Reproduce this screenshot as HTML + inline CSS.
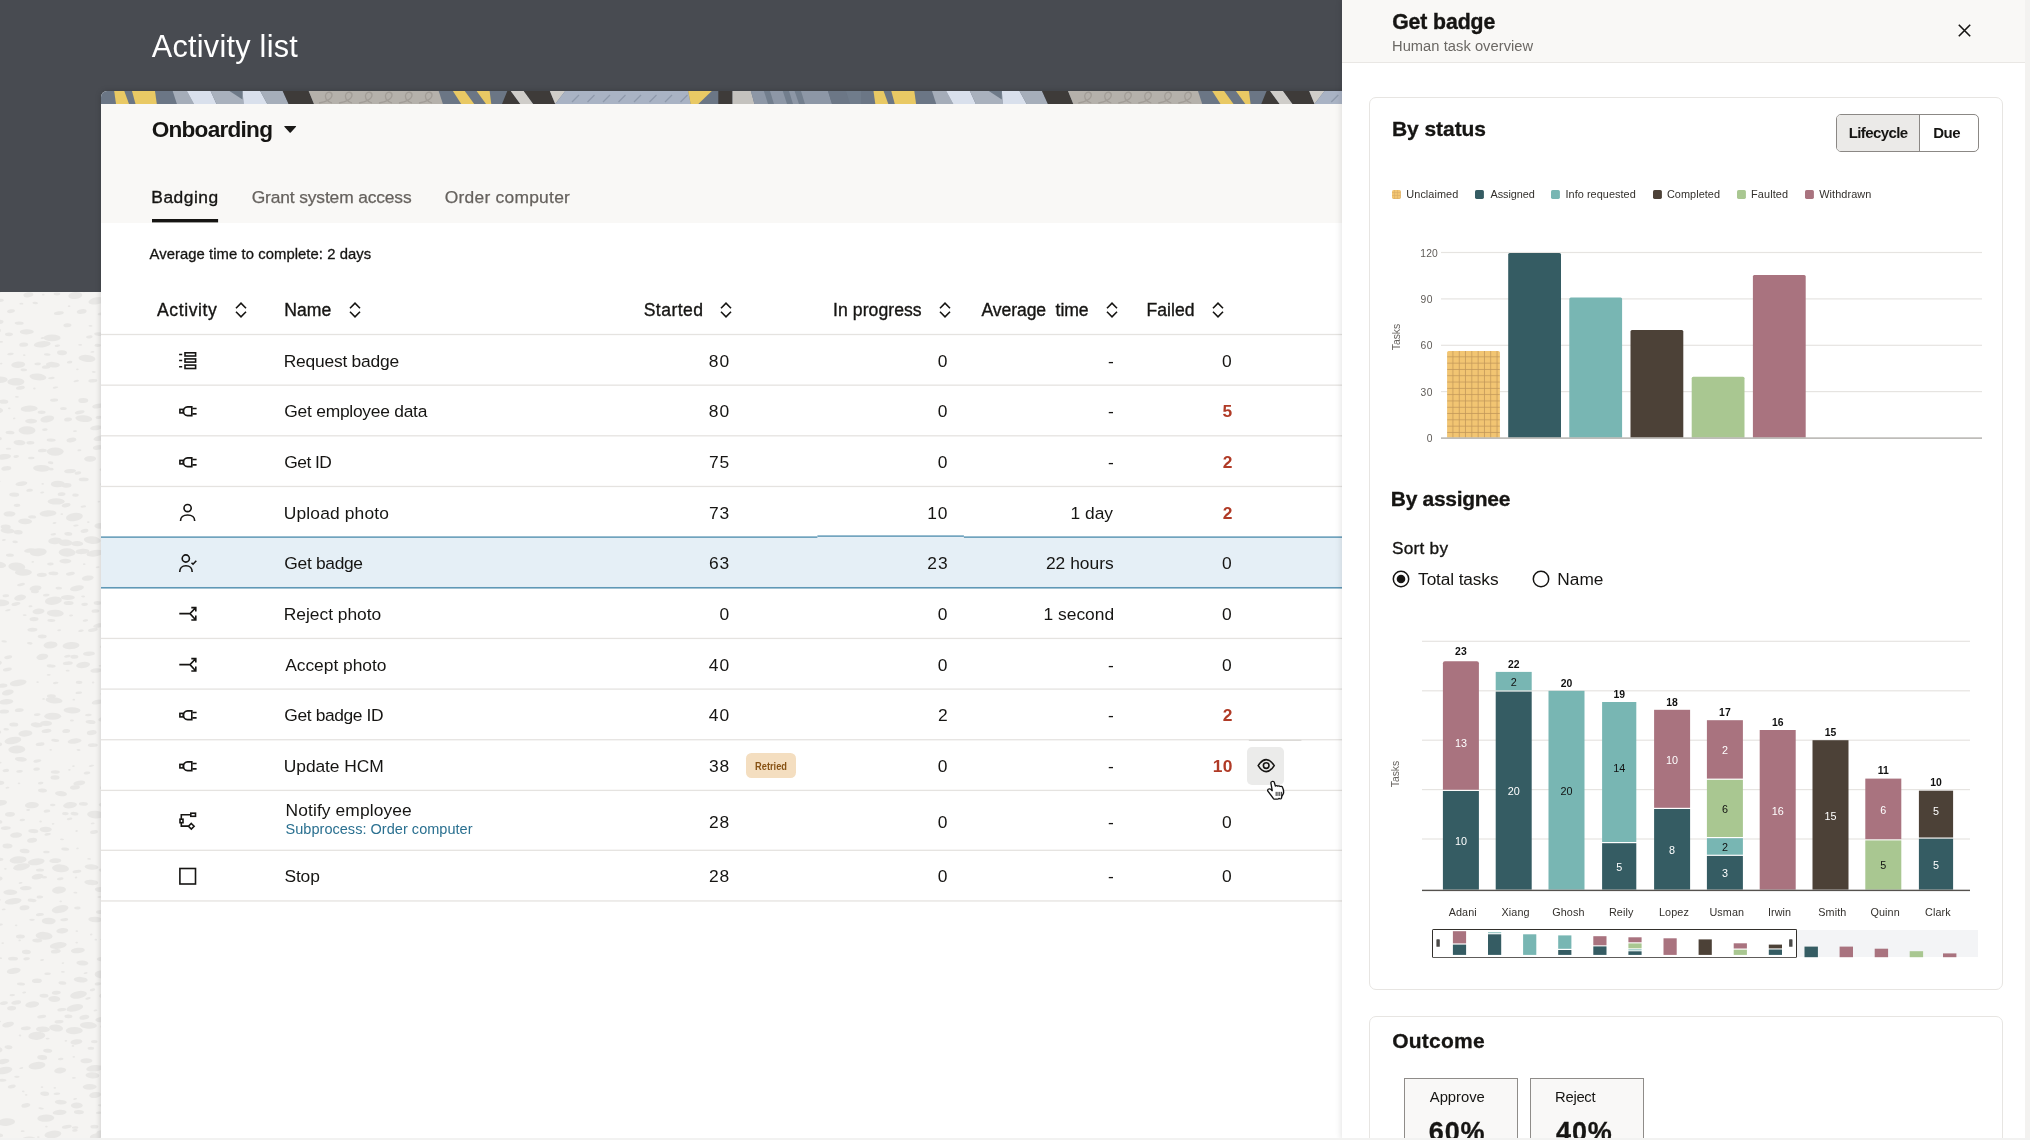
<!DOCTYPE html>
<html><head><meta charset="utf-8"><title>Activity list</title>
<style>
html,body{margin:0;padding:0;}
body{width:2030px;height:1140px;overflow:hidden;position:relative;background:#f5f4f2;font-family:"Liberation Sans",sans-serif;}
#root{position:absolute;left:0;top:0;width:2030px;height:1140px;overflow:hidden;will-change:transform;}
.t{position:absolute;white-space:pre;}
.b{position:absolute;box-sizing:border-box;}
svg{position:absolute;overflow:visible;}
</style></head><body>
<div id="root">
<svg style="left:0;top:0" width="110" height="1140" viewBox="0 0 110 1140"><g fill="#e8e7e5"><ellipse cx="-5.4" cy="291.8" rx="6.0" ry="2.5" transform="rotate(2 -5.4 291.8)"/><ellipse cx="7.0" cy="291.1" rx="2.8" ry="1.0" transform="rotate(3 7.0 291.1)"/><ellipse cx="28.4" cy="294.8" rx="5.0" ry="2.5" transform="rotate(-9 28.4 294.8)"/><ellipse cx="43.3" cy="294.7" rx="1.3" ry="0.9" transform="rotate(2 43.3 294.7)"/><ellipse cx="57.0" cy="294.0" rx="3.3" ry="1.4" transform="rotate(-0 57.0 294.0)"/><ellipse cx="75.3" cy="295.5" rx="7.0" ry="3.5" transform="rotate(-6 75.3 295.5)"/><ellipse cx="84.3" cy="291.3" rx="2.0" ry="0.9" transform="rotate(-7 84.3 291.3)"/><ellipse cx="104.3" cy="290.9" rx="1.3" ry="0.9" transform="rotate(-5 104.3 290.9)"/><ellipse cx="-0.2" cy="300.4" rx="4.0" ry="1.6" transform="rotate(-5 -0.2 300.4)"/><ellipse cx="21.4" cy="303.7" rx="2.0" ry="0.9" transform="rotate(0 21.4 303.7)"/><ellipse cx="35.2" cy="303.0" rx="2.8" ry="1.2" transform="rotate(6 35.2 303.0)"/><ellipse cx="69.1" cy="306.2" rx="1.3" ry="0.9" transform="rotate(-0 69.1 306.2)"/><ellipse cx="96.8" cy="300.8" rx="8.5" ry="3.5" transform="rotate(-10 96.8 300.8)"/><ellipse cx="-6.9" cy="315.3" rx="6.0" ry="2.3" transform="rotate(-10 -6.9 315.3)"/><ellipse cx="11.0" cy="311.2" rx="4.0" ry="1.9" transform="rotate(-9 11.0 311.2)"/><ellipse cx="58.9" cy="313.1" rx="5.0" ry="1.8" transform="rotate(-7 58.9 313.1)"/><ellipse cx="81.7" cy="311.5" rx="5.0" ry="2.4" transform="rotate(-9 81.7 311.5)"/><ellipse cx="100.9" cy="313.8" rx="3.3" ry="1.4" transform="rotate(-11 100.9 313.8)"/><ellipse cx="-1.5" cy="322.0" rx="5.0" ry="2.1" transform="rotate(-5 -1.5 322.0)"/><ellipse cx="19.2" cy="323.1" rx="4.5" ry="1.7" transform="rotate(1 19.2 323.1)"/><ellipse cx="67.4" cy="325.2" rx="4.0" ry="2.0" transform="rotate(-3 67.4 325.2)"/><ellipse cx="90.5" cy="325.9" rx="2.0" ry="0.9" transform="rotate(4 90.5 325.9)"/><ellipse cx="110.5" cy="327.0" rx="4.5" ry="1.8" transform="rotate(4 110.5 327.0)"/><ellipse cx="-7.5" cy="331.7" rx="8.5" ry="3.8" transform="rotate(-11 -7.5 331.7)"/><ellipse cx="9.0" cy="334.3" rx="4.0" ry="1.9" transform="rotate(1 9.0 334.3)"/><ellipse cx="26.8" cy="331.8" rx="7.0" ry="2.6" transform="rotate(-1 26.8 331.8)"/><ellipse cx="42.6" cy="338.0" rx="2.0" ry="0.9" transform="rotate(-7 42.6 338.0)"/><ellipse cx="52.1" cy="337.9" rx="8.5" ry="3.3" transform="rotate(-0 52.1 337.9)"/><ellipse cx="89.3" cy="336.9" rx="3.3" ry="1.5" transform="rotate(-8 89.3 336.9)"/><ellipse cx="98.7" cy="334.1" rx="4.5" ry="1.8" transform="rotate(4 98.7 334.1)"/><ellipse cx="1.1" cy="341.8" rx="2.0" ry="0.9" transform="rotate(-5 1.1 341.8)"/><ellipse cx="23.7" cy="344.7" rx="4.5" ry="2.1" transform="rotate(-6 23.7 344.7)"/><ellipse cx="42.2" cy="344.3" rx="8.5" ry="3.1" transform="rotate(-6 42.2 344.3)"/><ellipse cx="57.4" cy="345.7" rx="2.8" ry="1.2" transform="rotate(-7 57.4 345.7)"/><ellipse cx="80.2" cy="344.9" rx="2.0" ry="0.9" transform="rotate(3 80.2 344.9)"/><ellipse cx="97.8" cy="345.3" rx="3.3" ry="1.6" transform="rotate(2 97.8 345.3)"/><ellipse cx="-8.9" cy="353.2" rx="7.0" ry="3.2" transform="rotate(2 -8.9 353.2)"/><ellipse cx="10.5" cy="354.0" rx="3.3" ry="1.2" transform="rotate(-10 10.5 354.0)"/><ellipse cx="24.2" cy="355.1" rx="1.3" ry="0.9" transform="rotate(2 24.2 355.1)"/><ellipse cx="47.2" cy="354.5" rx="3.3" ry="1.2" transform="rotate(5 47.2 354.5)"/><ellipse cx="62.0" cy="352.7" rx="5.0" ry="2.5" transform="rotate(2 62.0 352.7)"/><ellipse cx="92.4" cy="351.9" rx="2.0" ry="0.9" transform="rotate(-7 92.4 351.9)"/><ellipse cx="1.2" cy="363.6" rx="1.3" ry="0.9" transform="rotate(-9 1.2 363.6)"/><ellipse cx="18.2" cy="364.7" rx="7.0" ry="3.3" transform="rotate(-3 18.2 364.7)"/><ellipse cx="37.7" cy="363.9" rx="3.3" ry="1.4" transform="rotate(-2 37.7 363.9)"/><ellipse cx="52.9" cy="364.7" rx="7.0" ry="2.8" transform="rotate(4 52.9 364.7)"/><ellipse cx="69.6" cy="362.1" rx="2.8" ry="1.4" transform="rotate(-8 69.6 362.1)"/><ellipse cx="87.0" cy="358.4" rx="8.5" ry="3.5" transform="rotate(5 87.0 358.4)"/><ellipse cx="23.8" cy="369.9" rx="3.3" ry="1.4" transform="rotate(3 23.8 369.9)"/><ellipse cx="46.3" cy="367.0" rx="4.5" ry="1.7" transform="rotate(-7 46.3 367.0)"/><ellipse cx="77.4" cy="369.3" rx="1.3" ry="0.9" transform="rotate(-1 77.4 369.3)"/><ellipse cx="93.7" cy="371.9" rx="2.0" ry="1.0" transform="rotate(1 93.7 371.9)"/><ellipse cx="-0.8" cy="379.8" rx="8.5" ry="3.3" transform="rotate(-1 -0.8 379.8)"/><ellipse cx="15.9" cy="381.8" rx="8.5" ry="3.8" transform="rotate(-1 15.9 381.8)"/><ellipse cx="37.9" cy="376.9" rx="8.5" ry="3.4" transform="rotate(6 37.9 376.9)"/><ellipse cx="51.4" cy="378.1" rx="3.3" ry="1.2" transform="rotate(-4 51.4 378.1)"/><ellipse cx="76.2" cy="381.0" rx="2.8" ry="1.1" transform="rotate(-10 76.2 381.0)"/><ellipse cx="92.8" cy="380.7" rx="4.5" ry="1.7" transform="rotate(-3 92.8 380.7)"/><ellipse cx="107.4" cy="380.7" rx="2.0" ry="0.9" transform="rotate(-1 107.4 380.7)"/><ellipse cx="-5.3" cy="391.8" rx="2.8" ry="1.3" transform="rotate(-10 -5.3 391.8)"/><ellipse cx="20.4" cy="387.8" rx="4.5" ry="1.9" transform="rotate(-8 20.4 387.8)"/><ellipse cx="34.4" cy="388.5" rx="1.3" ry="0.9" transform="rotate(1 34.4 388.5)"/><ellipse cx="55.5" cy="387.6" rx="2.8" ry="1.0" transform="rotate(-10 55.5 387.6)"/><ellipse cx="113.2" cy="387.2" rx="8.5" ry="4.2" transform="rotate(4 113.2 387.2)"/><ellipse cx="3.8" cy="401.6" rx="4.5" ry="2.2" transform="rotate(2 3.8 401.6)"/><ellipse cx="16.9" cy="396.9" rx="2.0" ry="0.9" transform="rotate(4 16.9 396.9)"/><ellipse cx="54.1" cy="400.2" rx="4.0" ry="1.6" transform="rotate(-2 54.1 400.2)"/><ellipse cx="83.3" cy="400.5" rx="5.0" ry="2.5" transform="rotate(1 83.3 400.5)"/><ellipse cx="103.3" cy="396.3" rx="1.3" ry="0.9" transform="rotate(-7 103.3 396.3)"/><ellipse cx="-3.9" cy="410.2" rx="7.0" ry="3.1" transform="rotate(3 -3.9 410.2)"/><ellipse cx="9.3" cy="408.4" rx="1.3" ry="0.9" transform="rotate(5 9.3 408.4)"/><ellipse cx="29.2" cy="408.7" rx="8.5" ry="3.1" transform="rotate(-3 29.2 408.7)"/><ellipse cx="41.6" cy="412.2" rx="4.0" ry="1.7" transform="rotate(-0 41.6 412.2)"/><ellipse cx="63.4" cy="408.6" rx="3.3" ry="1.5" transform="rotate(0 63.4 408.6)"/><ellipse cx="79.7" cy="412.3" rx="5.0" ry="1.8" transform="rotate(-11 79.7 412.3)"/><ellipse cx="98.1" cy="406.0" rx="6.0" ry="2.4" transform="rotate(-10 98.1 406.0)"/><ellipse cx="14.2" cy="418.4" rx="1.3" ry="0.9" transform="rotate(-11 14.2 418.4)"/><ellipse cx="31.1" cy="421.1" rx="6.0" ry="2.3" transform="rotate(-0 31.1 421.1)"/><ellipse cx="47.3" cy="419.0" rx="7.0" ry="3.3" transform="rotate(-10 47.3 419.0)"/><ellipse cx="68.1" cy="419.5" rx="4.0" ry="1.9" transform="rotate(-7 68.1 419.5)"/><ellipse cx="83.8" cy="418.6" rx="8.5" ry="3.3" transform="rotate(5 83.8 418.6)"/><ellipse cx="98.9" cy="417.4" rx="3.3" ry="1.6" transform="rotate(-7 98.9 417.4)"/><ellipse cx="-6.3" cy="428.4" rx="2.0" ry="0.9" transform="rotate(-8 -6.3 428.4)"/><ellipse cx="10.0" cy="432.5" rx="4.5" ry="1.8" transform="rotate(3 10.0 432.5)"/><ellipse cx="27.0" cy="430.4" rx="8.5" ry="4.1" transform="rotate(1 27.0 430.4)"/><ellipse cx="44.9" cy="429.6" rx="2.8" ry="1.3" transform="rotate(-2 44.9 429.6)"/><ellipse cx="75.0" cy="431.1" rx="2.0" ry="0.9" transform="rotate(-4 75.0 431.1)"/><ellipse cx="96.1" cy="427.8" rx="6.0" ry="2.4" transform="rotate(-8 96.1 427.8)"/><ellipse cx="-2.6" cy="438.6" rx="4.5" ry="1.8" transform="rotate(1 -2.6 438.6)"/><ellipse cx="19.5" cy="442.6" rx="6.0" ry="2.6" transform="rotate(4 19.5 442.6)"/><ellipse cx="30.4" cy="442.8" rx="4.0" ry="1.7" transform="rotate(1 30.4 442.8)"/><ellipse cx="51.2" cy="440.1" rx="4.5" ry="1.6" transform="rotate(2 51.2 440.1)"/><ellipse cx="71.4" cy="440.0" rx="5.0" ry="2.2" transform="rotate(-9 71.4 440.0)"/><ellipse cx="100.3" cy="438.1" rx="7.0" ry="2.6" transform="rotate(-12 100.3 438.1)"/><ellipse cx="-11.0" cy="451.0" rx="7.0" ry="2.6" transform="rotate(4 -11.0 451.0)"/><ellipse cx="8.5" cy="448.8" rx="2.8" ry="1.0" transform="rotate(1 8.5 448.8)"/><ellipse cx="42.4" cy="450.5" rx="4.5" ry="1.8" transform="rotate(-3 42.4 450.5)"/><ellipse cx="55.2" cy="451.6" rx="8.5" ry="4.1" transform="rotate(0 55.2 451.6)"/><ellipse cx="79.4" cy="450.3" rx="2.0" ry="1.0" transform="rotate(-3 79.4 450.3)"/><ellipse cx="97.8" cy="447.5" rx="5.0" ry="2.4" transform="rotate(-9 97.8 447.5)"/><ellipse cx="4.0" cy="456.8" rx="7.0" ry="2.8" transform="rotate(-6 4.0 456.8)"/><ellipse cx="16.2" cy="456.5" rx="2.8" ry="1.4" transform="rotate(-3 16.2 456.5)"/><ellipse cx="31.3" cy="458.0" rx="3.3" ry="1.3" transform="rotate(1 31.3 458.0)"/><ellipse cx="50.6" cy="462.7" rx="2.8" ry="1.4" transform="rotate(5 50.6 462.7)"/><ellipse cx="90.1" cy="458.8" rx="6.0" ry="2.9" transform="rotate(-2 90.1 458.8)"/><ellipse cx="105.2" cy="457.3" rx="3.3" ry="1.4" transform="rotate(2 105.2 457.3)"/><ellipse cx="-9.0" cy="467.3" rx="1.3" ry="0.9" transform="rotate(-3 -9.0 467.3)"/><ellipse cx="6.3" cy="468.4" rx="5.0" ry="2.2" transform="rotate(-6 6.3 468.4)"/><ellipse cx="41.6" cy="468.3" rx="8.5" ry="3.4" transform="rotate(2 41.6 468.3)"/><ellipse cx="50.9" cy="469.1" rx="2.8" ry="1.3" transform="rotate(1 50.9 469.1)"/><ellipse cx="70.1" cy="471.1" rx="6.0" ry="2.2" transform="rotate(-3 70.1 471.1)"/><ellipse cx="77.9" cy="473.0" rx="3.3" ry="1.6" transform="rotate(-8 77.9 473.0)"/><ellipse cx="102.3" cy="469.5" rx="2.8" ry="1.4" transform="rotate(-5 102.3 469.5)"/><ellipse cx="-1.5" cy="481.5" rx="2.0" ry="0.9" transform="rotate(-4 -1.5 481.5)"/><ellipse cx="21.4" cy="483.7" rx="6.0" ry="2.2" transform="rotate(-8 21.4 483.7)"/><ellipse cx="42.7" cy="483.8" rx="1.3" ry="0.9" transform="rotate(4 42.7 483.8)"/><ellipse cx="57.8" cy="484.0" rx="7.0" ry="3.3" transform="rotate(-2 57.8 484.0)"/><ellipse cx="66.5" cy="485.4" rx="5.0" ry="2.3" transform="rotate(-2 66.5 485.4)"/><ellipse cx="83.7" cy="479.4" rx="5.0" ry="1.9" transform="rotate(0 83.7 479.4)"/><ellipse cx="105.0" cy="483.7" rx="5.0" ry="1.8" transform="rotate(-10 105.0 483.7)"/><ellipse cx="-8.8" cy="493.8" rx="4.5" ry="2.2" transform="rotate(-0 -8.8 493.8)"/><ellipse cx="14.2" cy="494.6" rx="5.0" ry="2.1" transform="rotate(1 14.2 494.6)"/><ellipse cx="29.6" cy="490.3" rx="3.3" ry="1.5" transform="rotate(-6 29.6 490.3)"/><ellipse cx="42.2" cy="492.5" rx="2.0" ry="0.9" transform="rotate(-7 42.2 492.5)"/><ellipse cx="61.6" cy="494.1" rx="4.0" ry="1.9" transform="rotate(-6 61.6 494.1)"/><ellipse cx="75.5" cy="495.2" rx="3.3" ry="1.6" transform="rotate(3 75.5 495.2)"/><ellipse cx="107.8" cy="493.1" rx="2.0" ry="0.9" transform="rotate(-6 107.8 493.1)"/><ellipse cx="17.0" cy="505.3" rx="3.3" ry="1.6" transform="rotate(-2 17.0 505.3)"/><ellipse cx="56.2" cy="501.4" rx="8.5" ry="3.2" transform="rotate(0 56.2 501.4)"/><ellipse cx="66.1" cy="505.2" rx="4.5" ry="2.1" transform="rotate(-11 66.1 505.2)"/><ellipse cx="83.3" cy="506.5" rx="2.8" ry="1.1" transform="rotate(-5 83.3 506.5)"/><ellipse cx="98.9" cy="501.6" rx="1.3" ry="0.9" transform="rotate(-2 98.9 501.6)"/><ellipse cx="-10.0" cy="515.5" rx="3.3" ry="1.5" transform="rotate(-11 -10.0 515.5)"/><ellipse cx="9.5" cy="513.9" rx="6.0" ry="2.7" transform="rotate(-1 9.5 513.9)"/><ellipse cx="32.2" cy="516.9" rx="4.0" ry="1.7" transform="rotate(3 32.2 516.9)"/><ellipse cx="48.0" cy="513.4" rx="8.5" ry="3.2" transform="rotate(-3 48.0 513.4)"/><ellipse cx="61.8" cy="514.1" rx="1.3" ry="0.9" transform="rotate(-5 61.8 514.1)"/><ellipse cx="74.4" cy="517.0" rx="8.5" ry="4.1" transform="rotate(-8 74.4 517.0)"/><ellipse cx="5.7" cy="526.9" rx="5.0" ry="2.5" transform="rotate(1 5.7 526.9)"/><ellipse cx="25.1" cy="521.4" rx="7.0" ry="2.9" transform="rotate(1 25.1 521.4)"/><ellipse cx="54.5" cy="523.0" rx="2.0" ry="1.0" transform="rotate(-7 54.5 523.0)"/><ellipse cx="75.9" cy="525.6" rx="2.8" ry="1.0" transform="rotate(-5 75.9 525.6)"/><ellipse cx="88.3" cy="522.1" rx="1.3" ry="0.9" transform="rotate(-6 88.3 522.1)"/><ellipse cx="100.4" cy="525.9" rx="6.0" ry="2.9" transform="rotate(0 100.4 525.9)"/><ellipse cx="7.6" cy="530.7" rx="7.0" ry="2.7" transform="rotate(4 7.6 530.7)"/><ellipse cx="18.2" cy="532.3" rx="4.5" ry="2.2" transform="rotate(4 18.2 532.3)"/><ellipse cx="53.3" cy="534.3" rx="2.8" ry="1.1" transform="rotate(-8 53.3 534.3)"/><ellipse cx="68.3" cy="533.9" rx="4.0" ry="1.9" transform="rotate(4 68.3 533.9)"/><ellipse cx="84.5" cy="530.9" rx="4.0" ry="1.9" transform="rotate(-10 84.5 530.9)"/><ellipse cx="105.6" cy="533.0" rx="2.0" ry="0.9" transform="rotate(-11 105.6 533.0)"/><ellipse cx="3.9" cy="540.0" rx="2.0" ry="0.9" transform="rotate(-9 3.9 540.0)"/><ellipse cx="15.1" cy="541.9" rx="2.8" ry="1.4" transform="rotate(2 15.1 541.9)"/><ellipse cx="55.2" cy="540.9" rx="7.0" ry="3.3" transform="rotate(-3 55.2 540.9)"/><ellipse cx="65.5" cy="542.8" rx="7.0" ry="3.2" transform="rotate(2 65.5 542.8)"/><ellipse cx="77.2" cy="543.7" rx="6.0" ry="2.6" transform="rotate(1 77.2 543.7)"/><ellipse cx="92.3" cy="540.1" rx="8.5" ry="3.8" transform="rotate(5 92.3 540.1)"/><ellipse cx="108.5" cy="542.9" rx="2.8" ry="1.1" transform="rotate(3 108.5 542.9)"/><ellipse cx="-6.0" cy="553.1" rx="2.0" ry="1.0" transform="rotate(2 -6.0 553.1)"/><ellipse cx="9.9" cy="555.1" rx="4.0" ry="1.7" transform="rotate(1 9.9 555.1)"/><ellipse cx="30.1" cy="550.5" rx="6.0" ry="2.2" transform="rotate(-7 30.1 550.5)"/><ellipse cx="38.3" cy="552.2" rx="8.5" ry="4.0" transform="rotate(-5 38.3 552.2)"/><ellipse cx="67.1" cy="552.5" rx="8.5" ry="4.2" transform="rotate(1 67.1 552.5)"/><ellipse cx="82.4" cy="551.4" rx="7.0" ry="2.7" transform="rotate(-4 82.4 551.4)"/><ellipse cx="94.9" cy="553.2" rx="8.5" ry="3.3" transform="rotate(-8 94.9 553.2)"/><ellipse cx="-2.3" cy="564.7" rx="8.5" ry="3.3" transform="rotate(6 -2.3 564.7)"/><ellipse cx="16.8" cy="566.7" rx="8.5" ry="4.2" transform="rotate(5 16.8 566.7)"/><ellipse cx="32.8" cy="561.9" rx="1.3" ry="0.9" transform="rotate(-2 32.8 561.9)"/><ellipse cx="50.4" cy="563.9" rx="3.3" ry="1.5" transform="rotate(-3 50.4 563.9)"/><ellipse cx="65.4" cy="561.1" rx="6.0" ry="2.3" transform="rotate(0 65.4 561.1)"/><ellipse cx="84.2" cy="564.2" rx="1.3" ry="0.9" transform="rotate(-2 84.2 564.2)"/><ellipse cx="97.7" cy="567.2" rx="2.0" ry="0.9" transform="rotate(-6 97.7 567.2)"/><ellipse cx="-6.8" cy="577.3" rx="4.5" ry="2.1" transform="rotate(-5 -6.8 577.3)"/><ellipse cx="23.4" cy="572.4" rx="8.5" ry="3.3" transform="rotate(-1 23.4 572.4)"/><ellipse cx="41.8" cy="574.9" rx="5.0" ry="2.1" transform="rotate(-2 41.8 574.9)"/><ellipse cx="53.4" cy="573.3" rx="5.0" ry="1.9" transform="rotate(1 53.4 573.3)"/><ellipse cx="70.4" cy="573.7" rx="4.5" ry="1.8" transform="rotate(-8 70.4 573.7)"/><ellipse cx="87.8" cy="578.1" rx="6.0" ry="2.6" transform="rotate(-7 87.8 578.1)"/><ellipse cx="21.0" cy="584.6" rx="4.0" ry="1.5" transform="rotate(-11 21.0 584.6)"/><ellipse cx="35.5" cy="588.3" rx="6.0" ry="2.8" transform="rotate(-8 35.5 588.3)"/><ellipse cx="58.8" cy="588.2" rx="3.3" ry="1.4" transform="rotate(2 58.8 588.2)"/><ellipse cx="77.0" cy="588.2" rx="7.0" ry="2.8" transform="rotate(-10 77.0 588.2)"/><ellipse cx="110.9" cy="588.1" rx="8.5" ry="3.4" transform="rotate(-11 110.9 588.1)"/><ellipse cx="-9.4" cy="593.7" rx="2.8" ry="1.3" transform="rotate(4 -9.4 593.7)"/><ellipse cx="5.8" cy="595.7" rx="3.3" ry="1.5" transform="rotate(-5 5.8 595.7)"/><ellipse cx="20.1" cy="597.7" rx="6.0" ry="2.9" transform="rotate(-11 20.1 597.7)"/><ellipse cx="34.9" cy="591.5" rx="4.0" ry="1.7" transform="rotate(-1 34.9 591.5)"/><ellipse cx="46.3" cy="595.1" rx="3.3" ry="1.3" transform="rotate(-5 46.3 595.1)"/><ellipse cx="67.8" cy="597.5" rx="7.0" ry="2.6" transform="rotate(0 67.8 597.5)"/><ellipse cx="83.1" cy="596.4" rx="2.0" ry="1.0" transform="rotate(1 83.1 596.4)"/><ellipse cx="0.8" cy="602.9" rx="8.5" ry="3.4" transform="rotate(0 0.8 602.9)"/><ellipse cx="15.9" cy="603.9" rx="4.5" ry="1.8" transform="rotate(-10 15.9 603.9)"/><ellipse cx="30.5" cy="606.3" rx="2.0" ry="1.0" transform="rotate(-3 30.5 606.3)"/><ellipse cx="53.4" cy="600.7" rx="8.5" ry="4.1" transform="rotate(-7 53.4 600.7)"/><ellipse cx="68.6" cy="602.9" rx="5.0" ry="2.0" transform="rotate(0 68.6 602.9)"/><ellipse cx="84.6" cy="604.3" rx="3.3" ry="1.6" transform="rotate(-4 84.6 604.3)"/><ellipse cx="97.6" cy="603.0" rx="4.0" ry="1.9" transform="rotate(0 97.6 603.0)"/><ellipse cx="-11.8" cy="611.1" rx="2.8" ry="1.1" transform="rotate(-0 -11.8 611.1)"/><ellipse cx="7.9" cy="610.2" rx="2.8" ry="1.0" transform="rotate(-11 7.9 610.2)"/><ellipse cx="24.7" cy="615.2" rx="2.0" ry="0.9" transform="rotate(3 24.7 615.2)"/><ellipse cx="38.5" cy="611.4" rx="6.0" ry="2.8" transform="rotate(-5 38.5 611.4)"/><ellipse cx="55.3" cy="613.2" rx="8.5" ry="3.5" transform="rotate(2 55.3 613.2)"/><ellipse cx="71.1" cy="615.5" rx="2.0" ry="0.9" transform="rotate(-4 71.1 615.5)"/><ellipse cx="95.5" cy="611.0" rx="4.0" ry="1.8" transform="rotate(-3 95.5 611.0)"/><ellipse cx="-4.8" cy="621.0" rx="4.0" ry="1.8" transform="rotate(-9 -4.8 621.0)"/><ellipse cx="34.0" cy="619.1" rx="4.5" ry="2.1" transform="rotate(-2 34.0 619.1)"/><ellipse cx="51.4" cy="620.4" rx="4.0" ry="1.5" transform="rotate(2 51.4 620.4)"/><ellipse cx="85.4" cy="620.5" rx="2.8" ry="1.2" transform="rotate(-12 85.4 620.5)"/><ellipse cx="99.1" cy="625.4" rx="6.0" ry="2.2" transform="rotate(-12 99.1 625.4)"/><ellipse cx="-6.6" cy="634.2" rx="5.0" ry="2.0" transform="rotate(2 -6.6 634.2)"/><ellipse cx="32.4" cy="629.7" rx="5.0" ry="2.0" transform="rotate(-2 32.4 629.7)"/><ellipse cx="42.2" cy="636.5" rx="4.5" ry="1.9" transform="rotate(-1 42.2 636.5)"/><ellipse cx="59.2" cy="630.2" rx="2.0" ry="1.0" transform="rotate(-6 59.2 630.2)"/><ellipse cx="81.0" cy="630.8" rx="2.8" ry="1.2" transform="rotate(-10 81.0 630.8)"/><ellipse cx="92.9" cy="629.9" rx="5.0" ry="1.8" transform="rotate(-10 92.9 629.9)"/><ellipse cx="4.1" cy="641.4" rx="2.8" ry="1.1" transform="rotate(6 4.1 641.4)"/><ellipse cx="29.8" cy="643.3" rx="2.8" ry="1.3" transform="rotate(5 29.8 643.3)"/><ellipse cx="50.5" cy="645.0" rx="7.0" ry="3.5" transform="rotate(-5 50.5 645.0)"/><ellipse cx="71.0" cy="645.6" rx="8.5" ry="3.5" transform="rotate(-4 71.0 645.6)"/><ellipse cx="105.9" cy="646.5" rx="6.0" ry="2.5" transform="rotate(-3 105.9 646.5)"/><ellipse cx="8.2" cy="657.2" rx="4.0" ry="1.8" transform="rotate(-9 8.2 657.2)"/><ellipse cx="42.3" cy="656.8" rx="6.0" ry="3.0" transform="rotate(-10 42.3 656.8)"/><ellipse cx="67.4" cy="656.3" rx="3.3" ry="1.3" transform="rotate(-9 67.4 656.3)"/><ellipse cx="74.4" cy="656.8" rx="4.0" ry="2.0" transform="rotate(1 74.4 656.8)"/><ellipse cx="89.0" cy="653.7" rx="6.0" ry="2.3" transform="rotate(-3 89.0 653.7)"/><ellipse cx="-4.0" cy="663.4" rx="6.0" ry="2.9" transform="rotate(-11 -4.0 663.4)"/><ellipse cx="51.2" cy="666.0" rx="4.5" ry="1.6" transform="rotate(3 51.2 666.0)"/><ellipse cx="67.8" cy="663.2" rx="5.0" ry="1.8" transform="rotate(-3 67.8 663.2)"/><ellipse cx="83.1" cy="665.0" rx="7.0" ry="3.1" transform="rotate(-8 83.1 665.0)"/><ellipse cx="100.0" cy="665.9" rx="1.3" ry="0.9" transform="rotate(5 100.0 665.9)"/><ellipse cx="-9.4" cy="670.0" rx="2.8" ry="1.3" transform="rotate(-10 -9.4 670.0)"/><ellipse cx="7.4" cy="669.5" rx="4.5" ry="1.8" transform="rotate(-8 7.4 669.5)"/><ellipse cx="48.7" cy="674.8" rx="2.0" ry="0.9" transform="rotate(-5 48.7 674.8)"/><ellipse cx="67.6" cy="670.7" rx="2.0" ry="0.9" transform="rotate(-2 67.6 670.7)"/><ellipse cx="96.3" cy="670.5" rx="6.0" ry="2.3" transform="rotate(-5 96.3 670.5)"/><ellipse cx="109.5" cy="672.2" rx="4.5" ry="1.9" transform="rotate(5 109.5 672.2)"/><ellipse cx="2.4" cy="685.7" rx="5.0" ry="2.1" transform="rotate(-5 2.4 685.7)"/><ellipse cx="18.2" cy="682.8" rx="8.5" ry="3.2" transform="rotate(-8 18.2 682.8)"/><ellipse cx="37.6" cy="682.1" rx="1.3" ry="0.9" transform="rotate(4 37.6 682.1)"/><ellipse cx="55.7" cy="682.9" rx="2.8" ry="1.2" transform="rotate(-6 55.7 682.9)"/><ellipse cx="79.1" cy="682.4" rx="3.3" ry="1.6" transform="rotate(3 79.1 682.4)"/><ellipse cx="93.1" cy="682.5" rx="1.3" ry="0.9" transform="rotate(-0 93.1 682.5)"/><ellipse cx="-5.8" cy="694.1" rx="2.0" ry="0.9" transform="rotate(2 -5.8 694.1)"/><ellipse cx="7.8" cy="692.5" rx="6.0" ry="2.8" transform="rotate(-12 7.8 692.5)"/><ellipse cx="51.4" cy="696.1" rx="4.5" ry="1.9" transform="rotate(2 51.4 696.1)"/><ellipse cx="78.8" cy="692.8" rx="3.3" ry="1.2" transform="rotate(-7 78.8 692.8)"/><ellipse cx="105.3" cy="693.4" rx="5.0" ry="2.1" transform="rotate(-9 105.3 693.4)"/><ellipse cx="6.4" cy="701.8" rx="7.0" ry="2.7" transform="rotate(-5 6.4 701.8)"/><ellipse cx="43.6" cy="698.9" rx="1.3" ry="0.9" transform="rotate(1 43.6 698.9)"/><ellipse cx="54.1" cy="700.3" rx="8.5" ry="3.1" transform="rotate(5 54.1 700.3)"/><ellipse cx="73.8" cy="699.7" rx="1.3" ry="0.9" transform="rotate(-2 73.8 699.7)"/><ellipse cx="97.6" cy="702.1" rx="6.0" ry="2.3" transform="rotate(-10 97.6 702.1)"/><ellipse cx="-11.5" cy="712.0" rx="4.0" ry="1.9" transform="rotate(-4 -11.5 712.0)"/><ellipse cx="4.1" cy="711.6" rx="5.0" ry="2.0" transform="rotate(-2 4.1 711.6)"/><ellipse cx="19.3" cy="710.1" rx="4.5" ry="1.9" transform="rotate(-5 19.3 710.1)"/><ellipse cx="37.2" cy="714.6" rx="3.3" ry="1.4" transform="rotate(-5 37.2 714.6)"/><ellipse cx="52.7" cy="716.2" rx="8.5" ry="3.5" transform="rotate(0 52.7 716.2)"/><ellipse cx="72.0" cy="710.3" rx="8.5" ry="3.1" transform="rotate(2 72.0 710.3)"/><ellipse cx="88.4" cy="715.0" rx="3.3" ry="1.3" transform="rotate(-4 88.4 715.0)"/><ellipse cx="106.9" cy="712.2" rx="4.0" ry="1.8" transform="rotate(-8 106.9 712.2)"/><ellipse cx="-3.9" cy="723.4" rx="4.0" ry="1.8" transform="rotate(-11 -3.9 723.4)"/><ellipse cx="13.8" cy="724.6" rx="4.5" ry="2.0" transform="rotate(2 13.8 724.6)"/><ellipse cx="36.7" cy="724.9" rx="6.0" ry="2.5" transform="rotate(5 36.7 724.9)"/><ellipse cx="46.0" cy="723.4" rx="6.0" ry="2.7" transform="rotate(0 46.0 723.4)"/><ellipse cx="71.9" cy="720.5" rx="2.0" ry="1.0" transform="rotate(3 71.9 720.5)"/><ellipse cx="90.6" cy="722.0" rx="5.0" ry="2.0" transform="rotate(5 90.6 722.0)"/><ellipse cx="105.2" cy="719.1" rx="7.0" ry="2.7" transform="rotate(-7 105.2 719.1)"/><ellipse cx="-4.8" cy="732.0" rx="6.0" ry="2.6" transform="rotate(2 -4.8 732.0)"/><ellipse cx="6.2" cy="729.3" rx="2.8" ry="1.3" transform="rotate(3 6.2 729.3)"/><ellipse cx="25.4" cy="733.4" rx="7.0" ry="3.2" transform="rotate(-4 25.4 733.4)"/><ellipse cx="46.5" cy="730.9" rx="5.0" ry="2.0" transform="rotate(-7 46.5 730.9)"/><ellipse cx="66.2" cy="731.0" rx="4.0" ry="2.0" transform="rotate(-8 66.2 731.0)"/><ellipse cx="91.7" cy="732.6" rx="5.0" ry="2.4" transform="rotate(-8 91.7 732.6)"/><ellipse cx="108.2" cy="736.2" rx="4.0" ry="1.7" transform="rotate(-6 108.2 736.2)"/><ellipse cx="-2.3" cy="744.7" rx="4.5" ry="2.1" transform="rotate(-8 -2.3 744.7)"/><ellipse cx="12.9" cy="740.5" rx="8.5" ry="3.5" transform="rotate(-9 12.9 740.5)"/><ellipse cx="40.1" cy="744.2" rx="4.5" ry="1.8" transform="rotate(-7 40.1 744.2)"/><ellipse cx="55.2" cy="740.4" rx="4.0" ry="1.5" transform="rotate(4 55.2 740.4)"/><ellipse cx="74.6" cy="741.1" rx="7.0" ry="2.6" transform="rotate(-7 74.6 741.1)"/><ellipse cx="92.8" cy="745.2" rx="5.0" ry="1.9" transform="rotate(-1 92.8 745.2)"/><ellipse cx="108.9" cy="743.3" rx="7.0" ry="3.3" transform="rotate(-1 108.9 743.3)"/><ellipse cx="-7.3" cy="751.6" rx="7.0" ry="2.7" transform="rotate(1 -7.3 751.6)"/><ellipse cx="16.8" cy="749.5" rx="8.5" ry="3.9" transform="rotate(-2 16.8 749.5)"/><ellipse cx="50.7" cy="749.8" rx="1.3" ry="0.9" transform="rotate(6 50.7 749.8)"/><ellipse cx="78.5" cy="750.0" rx="2.0" ry="0.9" transform="rotate(4 78.5 750.0)"/><ellipse cx="-0.4" cy="762.6" rx="2.0" ry="0.9" transform="rotate(-8 -0.4 762.6)"/><ellipse cx="20.9" cy="759.3" rx="6.0" ry="2.3" transform="rotate(5 20.9 759.3)"/><ellipse cx="37.3" cy="761.0" rx="4.0" ry="1.6" transform="rotate(-9 37.3 761.0)"/><ellipse cx="73.5" cy="766.1" rx="1.3" ry="0.9" transform="rotate(-2 73.5 766.1)"/><ellipse cx="91.5" cy="765.8" rx="2.8" ry="1.0" transform="rotate(-11 91.5 765.8)"/><ellipse cx="-9.2" cy="773.0" rx="8.5" ry="3.7" transform="rotate(3 -9.2 773.0)"/><ellipse cx="5.8" cy="770.5" rx="3.3" ry="1.6" transform="rotate(-6 5.8 770.5)"/><ellipse cx="19.6" cy="771.4" rx="3.3" ry="1.3" transform="rotate(-6 19.6 771.4)"/><ellipse cx="36.6" cy="769.1" rx="3.3" ry="1.6" transform="rotate(-8 36.6 769.1)"/><ellipse cx="55.3" cy="772.0" rx="4.5" ry="1.7" transform="rotate(-1 55.3 772.0)"/><ellipse cx="69.4" cy="769.8" rx="1.3" ry="0.9" transform="rotate(-6 69.4 769.8)"/><ellipse cx="87.0" cy="773.0" rx="3.3" ry="1.4" transform="rotate(-8 87.0 773.0)"/><ellipse cx="103.9" cy="774.1" rx="2.8" ry="1.2" transform="rotate(6 103.9 774.1)"/><ellipse cx="-0.2" cy="782.9" rx="4.5" ry="2.2" transform="rotate(-2 -0.2 782.9)"/><ellipse cx="19.0" cy="783.3" rx="1.3" ry="0.9" transform="rotate(-4 19.0 783.3)"/><ellipse cx="40.7" cy="783.1" rx="2.8" ry="1.4" transform="rotate(-6 40.7 783.1)"/><ellipse cx="55.0" cy="777.5" rx="4.5" ry="2.2" transform="rotate(0 55.0 777.5)"/><ellipse cx="79.3" cy="783.1" rx="6.0" ry="2.5" transform="rotate(-9 79.3 783.1)"/><ellipse cx="-9.3" cy="790.9" rx="8.5" ry="3.2" transform="rotate(-2 -9.3 790.9)"/><ellipse cx="7.4" cy="787.7" rx="2.0" ry="0.9" transform="rotate(-6 7.4 787.7)"/><ellipse cx="42.5" cy="790.5" rx="4.5" ry="2.0" transform="rotate(4 42.5 790.5)"/><ellipse cx="61.0" cy="793.7" rx="6.0" ry="2.6" transform="rotate(6 61.0 793.7)"/><ellipse cx="74.9" cy="787.4" rx="5.0" ry="2.2" transform="rotate(-5 74.9 787.4)"/><ellipse cx="106.0" cy="787.3" rx="6.0" ry="2.7" transform="rotate(-6 106.0 787.3)"/><ellipse cx="0.1" cy="802.9" rx="7.0" ry="2.9" transform="rotate(-6 0.1 802.9)"/><ellipse cx="31.9" cy="805.2" rx="7.0" ry="3.1" transform="rotate(-3 31.9 805.2)"/><ellipse cx="52.8" cy="805.0" rx="2.8" ry="1.2" transform="rotate(2 52.8 805.0)"/><ellipse cx="70.0" cy="805.2" rx="7.0" ry="3.1" transform="rotate(-7 70.0 805.2)"/><ellipse cx="83.4" cy="803.8" rx="4.5" ry="1.9" transform="rotate(2 83.4 803.8)"/><ellipse cx="104.7" cy="804.5" rx="6.0" ry="2.5" transform="rotate(-2 104.7 804.5)"/><ellipse cx="-9.2" cy="811.1" rx="2.8" ry="1.4" transform="rotate(-10 -9.2 811.1)"/><ellipse cx="10.0" cy="814.3" rx="5.0" ry="2.4" transform="rotate(-3 10.0 814.3)"/><ellipse cx="28.2" cy="810.0" rx="2.0" ry="0.9" transform="rotate(3 28.2 810.0)"/><ellipse cx="46.9" cy="811.1" rx="3.3" ry="1.5" transform="rotate(-7 46.9 811.1)"/><ellipse cx="65.4" cy="813.7" rx="3.3" ry="1.6" transform="rotate(2 65.4 813.7)"/><ellipse cx="74.5" cy="813.7" rx="4.0" ry="1.8" transform="rotate(5 74.5 813.7)"/><ellipse cx="95.6" cy="814.6" rx="8.5" ry="3.9" transform="rotate(4 95.6 814.6)"/><ellipse cx="-2.5" cy="821.8" rx="5.0" ry="2.0" transform="rotate(2 -2.5 821.8)"/><ellipse cx="22.3" cy="820.0" rx="2.8" ry="1.3" transform="rotate(-5 22.3 820.0)"/><ellipse cx="40.6" cy="821.5" rx="1.3" ry="0.9" transform="rotate(-3 40.6 821.5)"/><ellipse cx="53.1" cy="823.8" rx="1.3" ry="0.9" transform="rotate(-8 53.1 823.8)"/><ellipse cx="69.6" cy="818.9" rx="2.8" ry="1.2" transform="rotate(-9 69.6 818.9)"/><ellipse cx="92.7" cy="823.4" rx="2.0" ry="0.9" transform="rotate(-7 92.7 823.4)"/><ellipse cx="108.6" cy="818.9" rx="6.0" ry="2.8" transform="rotate(-3 108.6 818.9)"/><ellipse cx="-6.3" cy="827.6" rx="6.0" ry="2.8" transform="rotate(5 -6.3 827.6)"/><ellipse cx="5.8" cy="828.1" rx="5.0" ry="1.8" transform="rotate(-3 5.8 828.1)"/><ellipse cx="33.3" cy="831.1" rx="5.0" ry="2.0" transform="rotate(4 33.3 831.1)"/><ellipse cx="45.7" cy="829.5" rx="6.0" ry="2.7" transform="rotate(-0 45.7 829.5)"/><ellipse cx="76.6" cy="831.0" rx="1.3" ry="0.9" transform="rotate(-11 76.6 831.0)"/><ellipse cx="94.0" cy="832.1" rx="4.0" ry="1.9" transform="rotate(-7 94.0 832.1)"/><ellipse cx="-3.2" cy="836.0" rx="2.0" ry="1.0" transform="rotate(4 -3.2 836.0)"/><ellipse cx="16.1" cy="835.1" rx="6.0" ry="2.7" transform="rotate(-4 16.1 835.1)"/><ellipse cx="32.1" cy="840.3" rx="5.0" ry="2.4" transform="rotate(-5 32.1 840.3)"/><ellipse cx="47.7" cy="834.3" rx="3.3" ry="1.2" transform="rotate(-11 47.7 834.3)"/><ellipse cx="62.0" cy="839.4" rx="2.0" ry="0.9" transform="rotate(6 62.0 839.4)"/><ellipse cx="105.1" cy="837.8" rx="1.3" ry="0.9" transform="rotate(-5 105.1 837.8)"/><ellipse cx="-10.0" cy="848.4" rx="4.0" ry="1.7" transform="rotate(-4 -10.0 848.4)"/><ellipse cx="7.5" cy="846.0" rx="5.0" ry="2.4" transform="rotate(1 7.5 846.0)"/><ellipse cx="24.6" cy="851.0" rx="5.0" ry="2.3" transform="rotate(5 24.6 851.0)"/><ellipse cx="46.4" cy="852.0" rx="3.3" ry="1.3" transform="rotate(-0 46.4 852.0)"/><ellipse cx="65.2" cy="849.1" rx="4.0" ry="1.6" transform="rotate(6 65.2 849.1)"/><ellipse cx="77.5" cy="848.4" rx="1.3" ry="0.9" transform="rotate(-10 77.5 848.4)"/><ellipse cx="0.1" cy="859.3" rx="3.3" ry="1.6" transform="rotate(1 0.1 859.3)"/><ellipse cx="18.1" cy="859.9" rx="8.5" ry="3.6" transform="rotate(-5 18.1 859.9)"/><ellipse cx="36.2" cy="861.8" rx="8.5" ry="3.4" transform="rotate(-7 36.2 861.8)"/><ellipse cx="55.3" cy="860.7" rx="6.0" ry="2.4" transform="rotate(-3 55.3 860.7)"/><ellipse cx="89.2" cy="858.9" rx="2.0" ry="0.9" transform="rotate(6 89.2 858.9)"/><ellipse cx="-7.1" cy="868.6" rx="2.8" ry="1.3" transform="rotate(-7 -7.1 868.6)"/><ellipse cx="5.4" cy="868.8" rx="1.3" ry="0.9" transform="rotate(2 5.4 868.8)"/><ellipse cx="21.6" cy="866.8" rx="8.5" ry="3.4" transform="rotate(-10 21.6 866.8)"/><ellipse cx="40.0" cy="870.0" rx="4.0" ry="1.5" transform="rotate(-0 40.0 870.0)"/><ellipse cx="60.5" cy="868.3" rx="8.5" ry="3.9" transform="rotate(4 60.5 868.3)"/><ellipse cx="76.9" cy="871.5" rx="4.5" ry="1.6" transform="rotate(-7 76.9 871.5)"/><ellipse cx="91.6" cy="867.0" rx="7.0" ry="2.7" transform="rotate(5 91.6 867.0)"/><ellipse cx="103.8" cy="870.1" rx="5.0" ry="1.9" transform="rotate(2 103.8 870.1)"/><ellipse cx="-1.8" cy="878.8" rx="4.5" ry="2.2" transform="rotate(-8 -1.8 878.8)"/><ellipse cx="20.6" cy="882.9" rx="2.0" ry="0.9" transform="rotate(-12 20.6 882.9)"/><ellipse cx="37.6" cy="876.7" rx="6.0" ry="2.7" transform="rotate(-10 37.6 876.7)"/><ellipse cx="44.3" cy="877.3" rx="2.8" ry="1.2" transform="rotate(0 44.3 877.3)"/><ellipse cx="60.2" cy="878.8" rx="3.3" ry="1.4" transform="rotate(-8 60.2 878.8)"/><ellipse cx="76.0" cy="877.5" rx="1.3" ry="0.9" transform="rotate(-9 76.0 877.5)"/><ellipse cx="91.3" cy="882.4" rx="7.0" ry="2.7" transform="rotate(4 91.3 882.4)"/><ellipse cx="112.9" cy="878.8" rx="7.0" ry="2.8" transform="rotate(-7 112.9 878.8)"/><ellipse cx="-7.6" cy="889.2" rx="3.3" ry="1.3" transform="rotate(-0 -7.6 889.2)"/><ellipse cx="10.3" cy="892.3" rx="7.0" ry="2.7" transform="rotate(0 10.3 892.3)"/><ellipse cx="25.8" cy="888.1" rx="6.0" ry="2.2" transform="rotate(-2 25.8 888.1)"/><ellipse cx="59.0" cy="890.1" rx="7.0" ry="3.5" transform="rotate(-6 59.0 890.1)"/><ellipse cx="75.4" cy="892.6" rx="2.0" ry="0.9" transform="rotate(2 75.4 892.6)"/><ellipse cx="100.8" cy="889.5" rx="6.0" ry="2.6" transform="rotate(2 100.8 889.5)"/><ellipse cx="-2.6" cy="899.9" rx="3.3" ry="1.5" transform="rotate(-2 -2.6 899.9)"/><ellipse cx="13.1" cy="901.3" rx="8.5" ry="3.1" transform="rotate(-8 13.1 901.3)"/><ellipse cx="32.1" cy="900.4" rx="4.5" ry="1.7" transform="rotate(6 32.1 900.4)"/><ellipse cx="39.9" cy="897.0" rx="3.3" ry="1.5" transform="rotate(2 39.9 897.0)"/><ellipse cx="60.7" cy="901.3" rx="1.3" ry="0.9" transform="rotate(6 60.7 901.3)"/><ellipse cx="99.4" cy="897.0" rx="2.0" ry="0.9" transform="rotate(-2 99.4 897.0)"/><ellipse cx="-7.8" cy="908.0" rx="2.8" ry="1.2" transform="rotate(-1 -7.8 908.0)"/><ellipse cx="3.7" cy="909.4" rx="2.0" ry="0.9" transform="rotate(-7 3.7 909.4)"/><ellipse cx="24.5" cy="907.8" rx="5.0" ry="2.5" transform="rotate(-5 24.5 907.8)"/><ellipse cx="39.9" cy="914.6" rx="4.0" ry="1.5" transform="rotate(-5 39.9 914.6)"/><ellipse cx="60.1" cy="909.1" rx="8.5" ry="3.8" transform="rotate(-12 60.1 909.1)"/><ellipse cx="77.4" cy="908.0" rx="3.3" ry="1.4" transform="rotate(-2 77.4 908.0)"/><ellipse cx="101.0" cy="912.0" rx="5.0" ry="2.1" transform="rotate(1 101.0 912.0)"/><ellipse cx="0.1" cy="924.7" rx="2.8" ry="1.1" transform="rotate(-8 0.1 924.7)"/><ellipse cx="16.1" cy="925.3" rx="1.3" ry="0.9" transform="rotate(2 16.1 925.3)"/><ellipse cx="32.0" cy="919.8" rx="2.8" ry="1.1" transform="rotate(-0 32.0 919.8)"/><ellipse cx="48.7" cy="921.0" rx="7.0" ry="3.3" transform="rotate(1 48.7 921.0)"/><ellipse cx="64.2" cy="919.7" rx="4.0" ry="1.5" transform="rotate(-6 64.2 919.7)"/><ellipse cx="95.3" cy="919.5" rx="7.0" ry="2.8" transform="rotate(2 95.3 919.5)"/><ellipse cx="-11.2" cy="934.9" rx="4.0" ry="1.6" transform="rotate(2 -11.2 934.9)"/><ellipse cx="20.4" cy="936.5" rx="4.5" ry="2.1" transform="rotate(1 20.4 936.5)"/><ellipse cx="44.1" cy="935.8" rx="8.5" ry="3.9" transform="rotate(4 44.1 935.8)"/><ellipse cx="62.3" cy="930.7" rx="6.0" ry="2.7" transform="rotate(-5 62.3 930.7)"/><ellipse cx="76.8" cy="931.1" rx="1.3" ry="0.9" transform="rotate(5 76.8 931.1)"/><ellipse cx="91.2" cy="934.5" rx="1.3" ry="0.9" transform="rotate(-9 91.2 934.5)"/><ellipse cx="2.7" cy="943.1" rx="1.3" ry="0.9" transform="rotate(-0 2.7 943.1)"/><ellipse cx="19.7" cy="940.4" rx="1.3" ry="0.9" transform="rotate(-3 19.7 940.4)"/><ellipse cx="37.3" cy="940.4" rx="5.0" ry="2.0" transform="rotate(1 37.3 940.4)"/><ellipse cx="58.3" cy="945.5" rx="8.5" ry="3.2" transform="rotate(-8 58.3 945.5)"/><ellipse cx="76.7" cy="942.6" rx="1.3" ry="0.9" transform="rotate(-8 76.7 942.6)"/><ellipse cx="95.8" cy="939.7" rx="1.3" ry="0.9" transform="rotate(0 95.8 939.7)"/><ellipse cx="106.4" cy="939.5" rx="6.0" ry="2.9" transform="rotate(-0 106.4 939.5)"/><ellipse cx="-11.1" cy="948.6" rx="2.0" ry="0.9" transform="rotate(1 -11.1 948.6)"/><ellipse cx="26.4" cy="952.0" rx="4.5" ry="2.2" transform="rotate(4 26.4 952.0)"/><ellipse cx="55.8" cy="951.3" rx="5.0" ry="2.1" transform="rotate(-7 55.8 951.3)"/><ellipse cx="77.8" cy="950.5" rx="7.0" ry="2.8" transform="rotate(-5 77.8 950.5)"/><ellipse cx="112.5" cy="950.7" rx="8.5" ry="3.7" transform="rotate(5 112.5 950.7)"/><ellipse cx="0.1" cy="958.2" rx="2.0" ry="0.9" transform="rotate(0 0.1 958.2)"/><ellipse cx="13.0" cy="958.7" rx="5.0" ry="1.9" transform="rotate(-0 13.0 958.7)"/><ellipse cx="26.6" cy="958.8" rx="3.3" ry="1.5" transform="rotate(-9 26.6 958.8)"/><ellipse cx="42.1" cy="960.0" rx="2.0" ry="0.9" transform="rotate(-9 42.1 960.0)"/><ellipse cx="62.9" cy="963.1" rx="1.3" ry="0.9" transform="rotate(-10 62.9 963.1)"/><ellipse cx="82.4" cy="963.0" rx="6.0" ry="2.5" transform="rotate(3 82.4 963.0)"/><ellipse cx="102.7" cy="959.1" rx="6.0" ry="2.4" transform="rotate(-0 102.7 959.1)"/><ellipse cx="-6.9" cy="975.4" rx="4.5" ry="1.7" transform="rotate(6 -6.9 975.4)"/><ellipse cx="13.7" cy="970.9" rx="7.0" ry="3.0" transform="rotate(-9 13.7 970.9)"/><ellipse cx="47.6" cy="973.8" rx="3.3" ry="1.3" transform="rotate(1 47.6 973.8)"/><ellipse cx="62.9" cy="971.8" rx="2.0" ry="0.9" transform="rotate(3 62.9 971.8)"/><ellipse cx="85.6" cy="973.1" rx="2.0" ry="0.9" transform="rotate(-10 85.6 973.1)"/><ellipse cx="103.1" cy="974.5" rx="8.5" ry="4.2" transform="rotate(2 103.1 974.5)"/><ellipse cx="21.0" cy="984.0" rx="4.0" ry="1.6" transform="rotate(2 21.0 984.0)"/><ellipse cx="36.9" cy="980.8" rx="5.0" ry="2.3" transform="rotate(-2 36.9 980.8)"/><ellipse cx="62.4" cy="983.0" rx="4.0" ry="1.8" transform="rotate(6 62.4 983.0)"/><ellipse cx="80.7" cy="979.7" rx="7.0" ry="2.8" transform="rotate(4 80.7 979.7)"/><ellipse cx="97.9" cy="983.8" rx="3.3" ry="1.6" transform="rotate(-7 97.9 983.8)"/><ellipse cx="109.9" cy="979.4" rx="8.5" ry="4.0" transform="rotate(-10 109.9 979.4)"/><ellipse cx="-7.7" cy="991.2" rx="6.0" ry="2.6" transform="rotate(-3 -7.7 991.2)"/><ellipse cx="12.3" cy="995.1" rx="2.8" ry="1.1" transform="rotate(-2 12.3 995.1)"/><ellipse cx="24.2" cy="992.5" rx="2.0" ry="0.9" transform="rotate(-9 24.2 992.5)"/><ellipse cx="44.0" cy="995.7" rx="4.5" ry="2.0" transform="rotate(2 44.0 995.7)"/><ellipse cx="56.3" cy="992.7" rx="4.5" ry="2.0" transform="rotate(-5 56.3 992.7)"/><ellipse cx="78.5" cy="994.8" rx="8.5" ry="3.7" transform="rotate(-10 78.5 994.8)"/><ellipse cx="92.5" cy="989.8" rx="2.8" ry="1.4" transform="rotate(-9 92.5 989.8)"/><ellipse cx="107.4" cy="994.6" rx="8.5" ry="3.5" transform="rotate(-12 107.4 994.6)"/><ellipse cx="3.9" cy="1003.1" rx="4.0" ry="1.8" transform="rotate(-9 3.9 1003.1)"/><ellipse cx="16.2" cy="1002.5" rx="5.0" ry="2.1" transform="rotate(-10 16.2 1002.5)"/><ellipse cx="32.2" cy="1004.5" rx="7.0" ry="3.0" transform="rotate(-8 32.2 1004.5)"/><ellipse cx="54.3" cy="999.0" rx="6.0" ry="2.9" transform="rotate(2 54.3 999.0)"/><ellipse cx="88.0" cy="998.4" rx="2.8" ry="1.2" transform="rotate(-12 88.0 998.4)"/><ellipse cx="-7.0" cy="1010.4" rx="4.5" ry="1.9" transform="rotate(-5 -7.0 1010.4)"/><ellipse cx="11.6" cy="1008.2" rx="4.5" ry="2.2" transform="rotate(-3 11.6 1008.2)"/><ellipse cx="61.8" cy="1009.7" rx="4.5" ry="1.6" transform="rotate(-6 61.8 1009.7)"/><ellipse cx="74.8" cy="1007.9" rx="8.5" ry="3.5" transform="rotate(-12 74.8 1007.9)"/><ellipse cx="95.5" cy="1010.4" rx="2.0" ry="0.9" transform="rotate(-10 95.5 1010.4)"/><ellipse cx="-1.0" cy="1021.4" rx="2.0" ry="0.9" transform="rotate(5 -1.0 1021.4)"/><ellipse cx="41.7" cy="1016.6" rx="4.5" ry="1.7" transform="rotate(-7 41.7 1016.6)"/><ellipse cx="59.0" cy="1021.8" rx="4.5" ry="1.7" transform="rotate(-3 59.0 1021.8)"/><ellipse cx="68.4" cy="1016.3" rx="4.0" ry="1.9" transform="rotate(3 68.4 1016.3)"/><ellipse cx="84.3" cy="1017.3" rx="5.0" ry="2.3" transform="rotate(-11 84.3 1017.3)"/><ellipse cx="102.3" cy="1019.5" rx="7.0" ry="2.8" transform="rotate(-5 102.3 1019.5)"/><ellipse cx="-11.3" cy="1026.5" rx="2.0" ry="0.9" transform="rotate(-7 -11.3 1026.5)"/><ellipse cx="8.1" cy="1024.6" rx="6.0" ry="2.7" transform="rotate(-12 8.1 1024.6)"/><ellipse cx="25.8" cy="1028.3" rx="5.0" ry="1.9" transform="rotate(-3 25.8 1028.3)"/><ellipse cx="43.0" cy="1029.3" rx="7.0" ry="2.9" transform="rotate(2 43.0 1029.3)"/><ellipse cx="56.1" cy="1028.0" rx="7.0" ry="3.4" transform="rotate(6 56.1 1028.0)"/><ellipse cx="74.3" cy="1030.6" rx="8.5" ry="3.7" transform="rotate(-1 74.3 1030.6)"/><ellipse cx="88.4" cy="1025.4" rx="8.5" ry="3.3" transform="rotate(2 88.4 1025.4)"/><ellipse cx="104.2" cy="1026.7" rx="4.0" ry="1.9" transform="rotate(4 104.2 1026.7)"/><ellipse cx="20.0" cy="1035.5" rx="1.3" ry="0.9" transform="rotate(-4 20.0 1035.5)"/><ellipse cx="36.8" cy="1035.8" rx="8.5" ry="4.1" transform="rotate(-4 36.8 1035.8)"/><ellipse cx="47.6" cy="1038.6" rx="2.0" ry="0.9" transform="rotate(-3 47.6 1038.6)"/><ellipse cx="65.9" cy="1040.8" rx="1.3" ry="0.9" transform="rotate(-8 65.9 1040.8)"/><ellipse cx="76.4" cy="1041.9" rx="6.0" ry="2.7" transform="rotate(-6 76.4 1041.9)"/><ellipse cx="94.3" cy="1041.6" rx="3.3" ry="1.6" transform="rotate(-0 94.3 1041.6)"/><ellipse cx="102.6" cy="1035.7" rx="2.0" ry="1.0" transform="rotate(5 102.6 1035.7)"/><ellipse cx="-4.5" cy="1049.8" rx="7.0" ry="3.3" transform="rotate(1 -4.5 1049.8)"/><ellipse cx="8.5" cy="1047.2" rx="4.0" ry="2.0" transform="rotate(5 8.5 1047.2)"/><ellipse cx="47.7" cy="1050.7" rx="4.5" ry="2.0" transform="rotate(3 47.7 1050.7)"/><ellipse cx="72.9" cy="1045.9" rx="1.3" ry="0.9" transform="rotate(-1 72.9 1045.9)"/><ellipse cx="90.9" cy="1048.2" rx="3.3" ry="1.5" transform="rotate(-0 90.9 1048.2)"/><ellipse cx="3.4" cy="1061.5" rx="6.0" ry="2.5" transform="rotate(-9 3.4 1061.5)"/><ellipse cx="42.2" cy="1057.5" rx="5.0" ry="2.4" transform="rotate(2 42.2 1057.5)"/><ellipse cx="60.7" cy="1059.0" rx="2.8" ry="1.3" transform="rotate(-6 60.7 1059.0)"/><ellipse cx="73.8" cy="1056.9" rx="1.3" ry="0.9" transform="rotate(-4 73.8 1056.9)"/><ellipse cx="86.4" cy="1060.8" rx="6.0" ry="2.5" transform="rotate(-1 86.4 1060.8)"/><ellipse cx="111.3" cy="1058.8" rx="4.5" ry="1.7" transform="rotate(-3 111.3 1058.8)"/><ellipse cx="-6.7" cy="1068.4" rx="3.3" ry="1.4" transform="rotate(-12 -6.7 1068.4)"/><ellipse cx="3.9" cy="1070.5" rx="8.5" ry="3.5" transform="rotate(-10 3.9 1070.5)"/><ellipse cx="21.3" cy="1068.1" rx="2.0" ry="0.9" transform="rotate(-11 21.3 1068.1)"/><ellipse cx="37.0" cy="1065.7" rx="8.5" ry="3.7" transform="rotate(-7 37.0 1065.7)"/><ellipse cx="60.2" cy="1070.5" rx="6.0" ry="2.9" transform="rotate(-6 60.2 1070.5)"/><ellipse cx="94.7" cy="1068.3" rx="8.5" ry="3.2" transform="rotate(-6 94.7 1068.3)"/><ellipse cx="108.5" cy="1069.6" rx="7.0" ry="3.3" transform="rotate(-1 108.5 1069.6)"/><ellipse cx="2.4" cy="1080.3" rx="4.0" ry="1.5" transform="rotate(1 2.4 1080.3)"/><ellipse cx="16.9" cy="1076.8" rx="2.8" ry="1.1" transform="rotate(-0 16.9 1076.8)"/><ellipse cx="73.9" cy="1077.9" rx="2.0" ry="0.9" transform="rotate(-3 73.9 1077.9)"/><ellipse cx="92.5" cy="1075.4" rx="7.0" ry="3.1" transform="rotate(3 92.5 1075.4)"/><ellipse cx="108.7" cy="1076.4" rx="6.0" ry="2.6" transform="rotate(-0 108.7 1076.4)"/><ellipse cx="-7.4" cy="1089.8" rx="2.8" ry="1.3" transform="rotate(-2 -7.4 1089.8)"/><ellipse cx="11.8" cy="1086.5" rx="4.0" ry="1.9" transform="rotate(-10 11.8 1086.5)"/><ellipse cx="23.2" cy="1091.4" rx="1.3" ry="0.9" transform="rotate(2 23.2 1091.4)"/><ellipse cx="42.0" cy="1087.2" rx="1.3" ry="0.9" transform="rotate(6 42.0 1087.2)"/><ellipse cx="54.8" cy="1087.9" rx="1.3" ry="0.9" transform="rotate(-4 54.8 1087.9)"/><ellipse cx="89.7" cy="1086.9" rx="7.0" ry="2.9" transform="rotate(-1 89.7 1086.9)"/><ellipse cx="108.6" cy="1090.3" rx="2.8" ry="1.1" transform="rotate(1 108.6 1090.3)"/><ellipse cx="26.1" cy="1094.9" rx="1.3" ry="0.9" transform="rotate(-9 26.1 1094.9)"/><ellipse cx="44.7" cy="1093.7" rx="4.5" ry="2.2" transform="rotate(5 44.7 1093.7)"/><ellipse cx="56.9" cy="1093.8" rx="3.3" ry="1.2" transform="rotate(-4 56.9 1093.8)"/><ellipse cx="75.2" cy="1098.9" rx="2.0" ry="0.9" transform="rotate(-12 75.2 1098.9)"/><ellipse cx="95.1" cy="1095.0" rx="6.0" ry="3.0" transform="rotate(-8 95.1 1095.0)"/><ellipse cx="110.5" cy="1095.8" rx="7.0" ry="3.5" transform="rotate(3 110.5 1095.8)"/><ellipse cx="-9.6" cy="1102.5" rx="5.0" ry="2.5" transform="rotate(-4 -9.6 1102.5)"/><ellipse cx="25.8" cy="1105.4" rx="4.5" ry="2.1" transform="rotate(-10 25.8 1105.4)"/><ellipse cx="41.1" cy="1108.4" rx="2.8" ry="1.0" transform="rotate(6 41.1 1108.4)"/><ellipse cx="60.8" cy="1102.2" rx="6.0" ry="2.3" transform="rotate(4 60.8 1102.2)"/><ellipse cx="76.8" cy="1105.5" rx="6.0" ry="2.9" transform="rotate(1 76.8 1105.5)"/><ellipse cx="101.1" cy="1105.4" rx="3.3" ry="1.2" transform="rotate(6 101.1 1105.4)"/><ellipse cx="45.8" cy="1118.1" rx="8.5" ry="3.7" transform="rotate(-2 45.8 1118.1)"/><ellipse cx="59.6" cy="1112.4" rx="7.0" ry="2.6" transform="rotate(-4 59.6 1112.4)"/><ellipse cx="78.9" cy="1112.2" rx="5.0" ry="2.1" transform="rotate(2 78.9 1112.2)"/><ellipse cx="98.7" cy="1112.8" rx="2.8" ry="1.3" transform="rotate(-3 98.7 1112.8)"/><ellipse cx="-9.1" cy="1121.8" rx="2.0" ry="1.0" transform="rotate(-7 -9.1 1121.8)"/><ellipse cx="6.5" cy="1122.1" rx="8.5" ry="3.8" transform="rotate(-4 6.5 1122.1)"/><ellipse cx="46.4" cy="1126.6" rx="1.3" ry="0.9" transform="rotate(-3 46.4 1126.6)"/><ellipse cx="66.8" cy="1126.8" rx="5.0" ry="1.8" transform="rotate(-9 66.8 1126.8)"/><ellipse cx="75.1" cy="1127.5" rx="3.3" ry="1.3" transform="rotate(-2 75.1 1127.5)"/><ellipse cx="94.4" cy="1126.7" rx="4.0" ry="1.9" transform="rotate(0 94.4 1126.7)"/><ellipse cx="-0.9" cy="1135.3" rx="4.0" ry="1.9" transform="rotate(2 -0.9 1135.3)"/><ellipse cx="22.7" cy="1131.2" rx="2.0" ry="0.9" transform="rotate(2 22.7 1131.2)"/><ellipse cx="38.3" cy="1137.1" rx="1.3" ry="0.9" transform="rotate(-1 38.3 1137.1)"/><ellipse cx="52.9" cy="1134.4" rx="8.5" ry="3.8" transform="rotate(-7 52.9 1134.4)"/><ellipse cx="74.9" cy="1130.4" rx="2.8" ry="1.3" transform="rotate(-5 74.9 1130.4)"/><ellipse cx="96.7" cy="1135.9" rx="7.0" ry="2.8" transform="rotate(-11 96.7 1135.9)"/><ellipse cx="104.9" cy="1133.3" rx="8.5" ry="3.3" transform="rotate(4 104.9 1133.3)"/><ellipse cx="-4.0" cy="1143.9" rx="6.0" ry="2.6" transform="rotate(0 -4.0 1143.9)"/><ellipse cx="7.4" cy="1143.2" rx="1.3" ry="0.9" transform="rotate(-9 7.4 1143.2)"/><ellipse cx="28.7" cy="1140.6" rx="8.5" ry="4.0" transform="rotate(-3 28.7 1140.6)"/><ellipse cx="46.8" cy="1146.4" rx="4.0" ry="1.9" transform="rotate(-1 46.8 1146.4)"/><ellipse cx="65.6" cy="1143.0" rx="4.0" ry="1.6" transform="rotate(4 65.6 1143.0)"/><ellipse cx="80.8" cy="1146.5" rx="2.8" ry="1.4" transform="rotate(-1 80.8 1146.5)"/><ellipse cx="99.0" cy="1145.5" rx="1.3" ry="0.9" transform="rotate(-8 99.0 1145.5)"/></g></svg>
<div class="b" style="left:0.00px;top:0.00px;width:1345.00px;height:292.00px;background:#484b51;"></div>
<div class="t" style="top:31px;font-size:30.6px;line-height:30.6px;color:#ffffff;letter-spacing:0.275px;left:151.74px;">Activity list</div>
<div class="b" style="left:101px;top:91px;width:1260px;height:1060px;background:#fff;border-radius:6px 6px 0 0;box-shadow:0 0 6px rgba(0,0,0,.18);overflow:hidden">
<svg style="left:0;top:0" width="1260" height="13" viewBox="0 0 1260 13"><rect width="1260" height="13" fill="#6b7685"/><path d="M13.2 0H23.3L28.0 13H15.0z" fill="#e9c964"/><path d="M31.0 0H54.0L55.8 13H34.5z" fill="#e9c964"/><path d="M71.7 0H85.9L93.0 13H75.9z" fill="#a5adb9"/><path d="M85.9 0H109.6L115.5 13H93.0z" fill="#d9e0ec"/><path d="M109.6 0H141.5L142.7 13H115.5z" fill="#a9b1bd"/><path d="M141.5 0H159.2L166.3 13H142.7z" fill="#d9e0ec"/><path d="M159.2 0H181.7L187.6 13H166.3z" fill="#a6aeba"/><path d="M181.7 0H207.7L213.0 13H187.6z" fill="#3e3b39"/><path d="M207.7 0H337.7L341.9 13H213.0z" fill="#b5b1ab"/><path d="M351.9 0H363.8L373.2 13H360.2z" fill="#e9c964"/><path d="M375.6 0H388.6L390.3 13H385.0z" fill="#e9c964"/><path d="M406.3 0H409.8L419.3 13H401.0z" fill="#3e3b39"/><path d="M409.8 0H422.8L432.3 13H419.3z" fill="#cfcdc9"/><path d="M422.8 0H448.9L454.2 13H432.3z" fill="#3e3b39"/><path d="M448.9 0H464.2L454.2 13H454.2z" fill="#cfcdc9"/><path d="M464.2 0H587.2L589.6 13H454.2z" fill="#a9b3c4"/><path d="M587.2 0H610.8L597.3 13H589.6z" fill="#e9c964"/><path d="M617.3 0H631.5L631.5 13H617.3z" fill="#3e3b39"/><path d="M631.5 0H649.9L653.4 13H631.5z" fill="#c4c2be"/><path d="M649.9 0H727.0L731.0 13H653.4z" fill="#8d97a6"/><path d="M662.9 0H669.0L673.0 13H667.0z" fill="#727e8d"/><path d="M681.8 0H688.0L692.0 13H686.0z" fill="#727e8d"/><path d="M693.6 0H700.0L704.0 13H698.0z" fill="#727e8d"/><path d="M727.0 0H745.0L749.0 13H731.0z" fill="#6c7786"/><path d="M745.0 0H760.0L760.0 13H749.0z" fill="#707c8b"/><path d="M128.5 0H141.5V8.500z" fill="#6e7a88"/><path d="M218.0 12c7-1 13-4 13-8c0-3-4-4-6-1c-2 3 0 7 6 9" fill="none" stroke="#a19c96" stroke-width="1.300"/><path d="M238.0 12c7-1 13-4 13-8c0-3-4-4-6-1c-2 3 0 7 6 9" fill="none" stroke="#a19c96" stroke-width="1.300"/><path d="M258.0 12c7-1 13-4 13-8c0-3-4-4-6-1c-2 3 0 7 6 9" fill="none" stroke="#a19c96" stroke-width="1.300"/><path d="M278.0 12c7-1 13-4 13-8c0-3-4-4-6-1c-2 3 0 7 6 9" fill="none" stroke="#a19c96" stroke-width="1.300"/><path d="M298.0 12c7-1 13-4 13-8c0-3-4-4-6-1c-2 3 0 7 6 9" fill="none" stroke="#a19c96" stroke-width="1.300"/><path d="M318.0 12c7-1 13-4 13-8c0-3-4-4-6-1c-2 3 0 7 6 9" fill="none" stroke="#a19c96" stroke-width="1.300"/><path d="M471.0 11l7-7" stroke="#8e99ab" stroke-width="1.300"/><path d="M486.5 11l7-7" stroke="#8e99ab" stroke-width="1.300"/><path d="M502.0 11l7-7" stroke="#8e99ab" stroke-width="1.300"/><path d="M517.5 11l7-7" stroke="#8e99ab" stroke-width="1.300"/><path d="M533.0 11l7-7" stroke="#8e99ab" stroke-width="1.300"/><path d="M548.5 11l7-7" stroke="#8e99ab" stroke-width="1.300"/><path d="M564.0 11l7-7" stroke="#8e99ab" stroke-width="1.300"/><path d="M579.5 11l7-7" stroke="#8e99ab" stroke-width="1.300"/><path d="M772.5 0H782.6L787.3 13H774.3z" fill="#e9c964"/><path d="M790.3 0H813.3L815.1 13H793.8z" fill="#e9c964"/><path d="M831.0 0H845.2L852.3 13H835.2z" fill="#a5adb9"/><path d="M845.2 0H868.9L874.8 13H852.3z" fill="#d9e0ec"/><path d="M868.9 0H900.8L902.0 13H874.8z" fill="#a9b1bd"/><path d="M900.8 0H918.5L925.6 13H902.0z" fill="#d9e0ec"/><path d="M918.5 0H941.0L946.9 13H925.6z" fill="#a6aeba"/><path d="M941.0 0H967.0L972.3 13H946.9z" fill="#3e3b39"/><path d="M967.0 0H1097.0L1101.2 13H972.3z" fill="#b5b1ab"/><path d="M1111.2 0H1123.1L1132.5 13H1119.5z" fill="#e9c964"/><path d="M1134.9 0H1147.9L1149.6 13H1144.3z" fill="#e9c964"/><path d="M1165.6 0H1169.1L1178.6 13H1160.3z" fill="#3e3b39"/><path d="M1169.1 0H1182.1L1191.6 13H1178.6z" fill="#cfcdc9"/><path d="M1182.1 0H1208.2L1213.5 13H1191.6z" fill="#3e3b39"/><path d="M1208.2 0H1223.5L1213.5 13H1213.5z" fill="#cfcdc9"/><path d="M1223.5 0H1346.5L1348.9 13H1213.5z" fill="#a9b3c4"/><path d="M1346.5 0H1370.1L1356.6 13H1348.9z" fill="#e9c964"/><path d="M1376.6 0H1390.8L1390.8 13H1376.6z" fill="#3e3b39"/><path d="M1390.8 0H1409.2L1412.7 13H1390.8z" fill="#c4c2be"/><path d="M1409.2 0H1486.3L1490.3 13H1412.7z" fill="#8d97a6"/><path d="M1422.2 0H1428.3L1432.3 13H1426.3z" fill="#727e8d"/><path d="M1441.1 0H1447.3L1451.3 13H1445.3z" fill="#727e8d"/><path d="M1452.9 0H1459.3L1463.3 13H1457.3z" fill="#727e8d"/><path d="M1486.3 0H1504.3L1508.3 13H1490.3z" fill="#6c7786"/><path d="M1504.3 0H1519.3L1519.3 13H1508.3z" fill="#707c8b"/><path d="M887.8 0H900.8V8.500z" fill="#6e7a88"/><path d="M977.3 12c7-1 13-4 13-8c0-3-4-4-6-1c-2 3 0 7 6 9" fill="none" stroke="#a19c96" stroke-width="1.300"/><path d="M997.3 12c7-1 13-4 13-8c0-3-4-4-6-1c-2 3 0 7 6 9" fill="none" stroke="#a19c96" stroke-width="1.300"/><path d="M1017.3 12c7-1 13-4 13-8c0-3-4-4-6-1c-2 3 0 7 6 9" fill="none" stroke="#a19c96" stroke-width="1.300"/><path d="M1037.3 12c7-1 13-4 13-8c0-3-4-4-6-1c-2 3 0 7 6 9" fill="none" stroke="#a19c96" stroke-width="1.300"/><path d="M1057.3 12c7-1 13-4 13-8c0-3-4-4-6-1c-2 3 0 7 6 9" fill="none" stroke="#a19c96" stroke-width="1.300"/><path d="M1077.3 12c7-1 13-4 13-8c0-3-4-4-6-1c-2 3 0 7 6 9" fill="none" stroke="#a19c96" stroke-width="1.300"/><path d="M1230.3 11l7-7" stroke="#8e99ab" stroke-width="1.300"/><path d="M1245.8 11l7-7" stroke="#8e99ab" stroke-width="1.300"/><path d="M1261.3 11l7-7" stroke="#8e99ab" stroke-width="1.300"/><path d="M1276.8 11l7-7" stroke="#8e99ab" stroke-width="1.300"/><path d="M1292.3 11l7-7" stroke="#8e99ab" stroke-width="1.300"/><path d="M1307.8 11l7-7" stroke="#8e99ab" stroke-width="1.300"/><path d="M1323.3 11l7-7" stroke="#8e99ab" stroke-width="1.300"/><path d="M1338.8 11l7-7" stroke="#8e99ab" stroke-width="1.300"/></svg>
<div class="b" style="left:0;top:13px;width:1260px;height:118.6px;background:#f9f8f6"></div>
</div>
<div class="t" style="top:119px;font-size:22.6px;line-height:22.6px;color:#161513;font-weight:700;letter-spacing:-0.744px;left:151.67px;">Onboarding</div>
<svg style="left:283.8px;top:126px" width="12.4" height="7" viewBox="0 0 12.4 7"><path d="M0.8 0h10.8q1 0 .4 .8L6.8 6.5q-.6 .7-1.2 0L.4 .8Q-.2 0 .8 0z" fill="#1b1a18"/></svg>
<div class="t" style="top:189px;font-size:17.4px;line-height:17.4px;color:#161513;letter-spacing:0.52px;left:151.27px;-webkit-text-stroke:0.35px #161513;">Badging</div>
<div class="t" style="top:189px;font-size:17.4px;line-height:17.4px;color:#66625e;letter-spacing:-0.136px;left:251.72px;-webkit-text-stroke:0.25px #66625e;">Grant system access</div>
<div class="t" style="top:189px;font-size:17.4px;line-height:17.4px;color:#66625e;letter-spacing:0.264px;left:444.68px;-webkit-text-stroke:0.25px #66625e;">Order computer</div>
<div class="t" style="top:247px;font-size:14.8px;line-height:14.8px;color:#161513;letter-spacing:0.078px;left:149.47px;-webkit-text-stroke:0.3px #161513;">Average time to complete: 2 days</div>
<div class="t" style="top:302px;font-size:17.6px;line-height:17.6px;color:#161513;letter-spacing:0.591px;left:156.97px;-webkit-text-stroke:0.35px #161513;">Activity</div>
<svg style="left:234.5px;top:302px" width="12" height="16" viewBox="0 0 12 16"><path d="M1 6.2L6 1.2L11 6.2M1 9.8L6 14.8L11 9.8" fill="none" stroke="#161513" stroke-width="1.6" stroke-linejoin="miter"/></svg>
<div class="t" style="top:302px;font-size:17.6px;line-height:17.6px;color:#161513;letter-spacing:0.096px;left:284.16px;-webkit-text-stroke:0.35px #161513;">Name</div>
<svg style="left:349.4px;top:302px" width="12" height="16" viewBox="0 0 12 16"><path d="M1 6.2L6 1.2L11 6.2M1 9.8L6 14.8L11 9.8" fill="none" stroke="#161513" stroke-width="1.6" stroke-linejoin="miter"/></svg>
<div class="t" style="top:302px;font-size:17.6px;line-height:17.6px;color:#161513;letter-spacing:0.45px;left:643.70px;-webkit-text-stroke:0.35px #161513;">Started</div>
<svg style="left:720.0px;top:302px" width="12" height="16" viewBox="0 0 12 16"><path d="M1 6.2L6 1.2L11 6.2M1 9.8L6 14.8L11 9.8" fill="none" stroke="#161513" stroke-width="1.6" stroke-linejoin="miter"/></svg>
<div class="t" style="top:302px;font-size:17.6px;line-height:17.6px;color:#161513;letter-spacing:0.054px;left:833.08px;-webkit-text-stroke:0.35px #161513;">In progress</div>
<svg style="left:939.0px;top:302px" width="12" height="16" viewBox="0 0 12 16"><path d="M1 6.2L6 1.2L11 6.2M1 9.8L6 14.8L11 9.8" fill="none" stroke="#161513" stroke-width="1.6" stroke-linejoin="miter"/></svg>
<div class="t" style="top:302px;font-size:17.6px;line-height:17.6px;color:#161513;letter-spacing:-0.093px;left:981.47px;-webkit-text-stroke:0.35px #161513;">Average  time</div>
<svg style="left:1105.5px;top:302px" width="12" height="16" viewBox="0 0 12 16"><path d="M1 6.2L6 1.2L11 6.2M1 9.8L6 14.8L11 9.8" fill="none" stroke="#161513" stroke-width="1.6" stroke-linejoin="miter"/></svg>
<div class="t" style="top:302px;font-size:17.6px;line-height:17.6px;color:#161513;letter-spacing:0.011px;left:1146.56px;-webkit-text-stroke:0.35px #161513;">Failed</div>
<svg style="left:1212.0px;top:302px" width="12" height="16" viewBox="0 0 12 16"><path d="M1 6.2L6 1.2L11 6.2M1 9.8L6 14.8L11 9.8" fill="none" stroke="#161513" stroke-width="1.6" stroke-linejoin="miter"/></svg>
<svg style="left:170px;top:345.00px" width="36" height="30" viewBox="0 0 36 30"><g fill="none" stroke="#161513" stroke-width="1.6"><path d="M9.1 9.5h3.1M9.1 15.5h3.1M9.1 21.7h3.1"/><rect x="15" y="7.8" width="10.6" height="3.2"/><rect x="15" y="13.9" width="10.6" height="3.2"/><rect x="15" y="20.1" width="10.6" height="3.4"/></g></svg>
<div class="t" style="top:353px;font-size:17.4px;line-height:17.4px;color:#161513;letter-spacing:-0.222px;left:283.77px;">Request badge</div>
<div class="t" style="top:353px;font-size:17.4px;line-height:17.4px;color:#161513;letter-spacing:0.9px;right:1300.02px;">80</div>
<div class="t" style="top:353px;font-size:17.4px;line-height:17.4px;color:#161513;right:1082.52px;">0</div>
<div class="t" style="top:353px;font-size:17.4px;line-height:17.4px;color:#161513;right:916.23px;">-</div>
<div class="t" style="top:353px;font-size:17.4px;line-height:17.4px;color:#161513;right:798.22px;">0</div>
<svg style="left:170px;top:396.00px" width="36" height="30" viewBox="0 0 36 30"><g fill="none" stroke="#161513" stroke-width="1.6"><rect x="9.9" y="13.4" width="3.5" height="3.5"/><path d="M21.8 10.9h-4.2c-2.6 0-4.2 2.2-4.2 4.3c0 2.2 1.6 4.4 4.2 4.4h4.2z"/><path d="M22.4 12.5h4.2M22.4 17.9h4.2"/></g></svg>
<div class="t" style="top:403px;font-size:17.4px;line-height:17.4px;color:#161513;letter-spacing:-0.242px;left:284.32px;">Get employee data</div>
<div class="t" style="top:403px;font-size:17.4px;line-height:17.4px;color:#161513;letter-spacing:0.9px;right:1300.02px;">80</div>
<div class="t" style="top:403px;font-size:17.4px;line-height:17.4px;color:#161513;right:1082.52px;">0</div>
<div class="t" style="top:403px;font-size:17.4px;line-height:17.4px;color:#161513;right:916.23px;">-</div>
<div class="t" style="top:403px;font-size:17.4px;line-height:17.4px;color:#b03a26;font-weight:700;right:797.92px;">5</div>
<svg style="left:170px;top:446.66px" width="36" height="30" viewBox="0 0 36 30"><g fill="none" stroke="#161513" stroke-width="1.6"><rect x="9.9" y="13.4" width="3.5" height="3.5"/><path d="M21.8 10.9h-4.2c-2.6 0-4.2 2.2-4.2 4.3c0 2.2 1.6 4.4 4.2 4.4h4.2z"/><path d="M22.4 12.5h4.2M22.4 17.9h4.2"/></g></svg>
<div class="t" style="top:454px;font-size:17.4px;line-height:17.4px;color:#161513;letter-spacing:-0.552px;left:284.32px;">Get ID</div>
<div class="t" style="top:454px;font-size:17.4px;line-height:17.4px;color:#161513;letter-spacing:0.9px;right:1299.97px;">75</div>
<div class="t" style="top:454px;font-size:17.4px;line-height:17.4px;color:#161513;right:1082.52px;">0</div>
<div class="t" style="top:454px;font-size:17.4px;line-height:17.4px;color:#161513;right:916.23px;">-</div>
<div class="t" style="top:454px;font-size:17.4px;line-height:17.4px;color:#b03a26;font-weight:700;right:797.70px;">2</div>
<svg style="left:170px;top:497.00px" width="36" height="30" viewBox="0 0 36 30"><g fill="none" stroke="#161513" stroke-width="1.6"><circle cx="17.6" cy="11.05" r="3.6"/><path d="M10.5 23.9c0-3.4 2.6-5.9 7.1-5.9s7.1 2.5 7.1 5.9"/></g></svg>
<div class="t" style="top:505px;font-size:17.4px;line-height:17.4px;color:#161513;letter-spacing:0.137px;left:283.86px;">Upload photo</div>
<div class="t" style="top:505px;font-size:17.4px;line-height:17.4px;color:#161513;letter-spacing:0.9px;right:1299.94px;">73</div>
<div class="t" style="top:505px;font-size:17.4px;line-height:17.4px;color:#161513;letter-spacing:0.9px;right:1081.62px;">10</div>
<div class="t" style="top:505px;font-size:17.4px;line-height:17.4px;color:#161513;right:916.97px;">1 day</div>
<div class="t" style="top:505px;font-size:17.4px;line-height:17.4px;color:#b03a26;font-weight:700;right:797.70px;">2</div>
<svg style="left:0;top:0" width="2030" height="1140"><rect x="101" y="537.12" width="1245" height="50.66" fill="#e5eff6"/></svg>
<svg style="left:170px;top:548.00px" width="36" height="30" viewBox="0 0 36 30"><g fill="none" stroke="#161513" stroke-width="1.6"><circle cx="15.8" cy="10.5" r="3.6"/><path d="M9.7 23.9c0-3.4 2.2-6.2 6.25-6.2s6.25 2.8 6.25 6.2"/><path d="M21.5 14.7l1.5 1.5l3.3-3.5"/></g></svg>
<div class="t" style="top:555px;font-size:17.4px;line-height:17.4px;color:#161513;letter-spacing:-0.311px;left:284.32px;">Get badge</div>
<div class="t" style="top:555px;font-size:17.4px;line-height:17.4px;color:#161513;letter-spacing:0.9px;right:1299.94px;">63</div>
<div class="t" style="top:555px;font-size:17.4px;line-height:17.4px;color:#161513;letter-spacing:0.9px;right:1081.54px;">23</div>
<div class="t" style="top:555px;font-size:17.4px;line-height:17.4px;color:#161513;right:916.37px;">22 hours</div>
<div class="t" style="top:555px;font-size:17.4px;line-height:17.4px;color:#161513;right:798.22px;">0</div>
<svg style="left:170px;top:599.00px" width="36" height="30" viewBox="0 0 36 30"><g fill="none" stroke="#161513" stroke-width="1.6"><path d="M9.3 14.6h10.7M20 14.6l5.6-5.8M20 14.6l5.6 6.2M21.3 8.6h4.5v4M21.3 21h4.5v-4.4"/></g></svg>
<div class="t" style="top:606px;font-size:17.4px;line-height:17.4px;color:#161513;letter-spacing:-0.018px;left:283.77px;">Reject photo</div>
<div class="t" style="top:606px;font-size:17.4px;line-height:17.4px;color:#161513;right:1300.92px;">0</div>
<div class="t" style="top:606px;font-size:17.4px;line-height:17.4px;color:#161513;right:1082.52px;">0</div>
<div class="t" style="top:606px;font-size:17.4px;line-height:17.4px;color:#161513;right:915.88px;">1 second</div>
<div class="t" style="top:606px;font-size:17.4px;line-height:17.4px;color:#161513;right:798.22px;">0</div>
<svg style="left:170px;top:649.66px" width="36" height="30" viewBox="0 0 36 30"><g fill="none" stroke="#161513" stroke-width="1.6"><path d="M9.3 14.6h10.7M20 14.6l5.6-5.8M20 14.6l5.6 6.2M21.3 8.6h4.5v4M21.3 21h4.5v-4.4"/></g></svg>
<div class="t" style="top:657px;font-size:17.4px;line-height:17.4px;color:#161513;letter-spacing:-0.015px;left:285.17px;">Accept photo</div>
<div class="t" style="top:657px;font-size:17.4px;line-height:17.4px;color:#161513;letter-spacing:0.9px;right:1300.02px;">40</div>
<div class="t" style="top:657px;font-size:17.4px;line-height:17.4px;color:#161513;right:1082.52px;">0</div>
<div class="t" style="top:657px;font-size:17.4px;line-height:17.4px;color:#161513;right:916.23px;">-</div>
<div class="t" style="top:657px;font-size:17.4px;line-height:17.4px;color:#161513;right:798.22px;">0</div>
<svg style="left:170px;top:699.94px" width="36" height="30" viewBox="0 0 36 30"><g fill="none" stroke="#161513" stroke-width="1.6"><rect x="9.9" y="13.4" width="3.5" height="3.5"/><path d="M21.8 10.9h-4.2c-2.6 0-4.2 2.2-4.2 4.3c0 2.2 1.6 4.4 4.2 4.4h4.2z"/><path d="M22.4 12.5h4.2M22.4 17.9h4.2"/></g></svg>
<div class="t" style="top:707px;font-size:17.4px;line-height:17.4px;color:#161513;letter-spacing:-0.377px;left:284.32px;">Get badge ID</div>
<div class="t" style="top:707px;font-size:17.4px;line-height:17.4px;color:#161513;letter-spacing:0.9px;right:1300.02px;">40</div>
<div class="t" style="top:707px;font-size:17.4px;line-height:17.4px;color:#161513;right:1082.32px;">2</div>
<div class="t" style="top:707px;font-size:17.4px;line-height:17.4px;color:#161513;right:916.23px;">-</div>
<div class="t" style="top:707px;font-size:17.4px;line-height:17.4px;color:#b03a26;font-weight:700;right:797.70px;">2</div>
<svg style="left:170px;top:750.60px" width="36" height="30" viewBox="0 0 36 30"><g fill="none" stroke="#161513" stroke-width="1.6"><rect x="9.9" y="13.4" width="3.5" height="3.5"/><path d="M21.8 10.9h-4.2c-2.6 0-4.2 2.2-4.2 4.3c0 2.2 1.6 4.4 4.2 4.4h4.2z"/><path d="M22.4 12.5h4.2M22.4 17.9h4.2"/></g></svg>
<div class="t" style="top:758px;font-size:17.4px;line-height:17.4px;color:#161513;letter-spacing:-0.083px;left:283.86px;">Update HCM</div>
<div class="t" style="top:758px;font-size:17.4px;line-height:17.4px;color:#161513;letter-spacing:0.9px;right:1299.94px;">38</div>
<div class="t" style="top:758px;font-size:17.4px;line-height:17.4px;color:#161513;right:1082.52px;">0</div>
<div class="t" style="top:758px;font-size:17.4px;line-height:17.4px;color:#161513;right:916.23px;">-</div>
<div class="t" style="top:758px;font-size:17.4px;line-height:17.4px;color:#b03a26;font-weight:700;letter-spacing:0.3px;right:797.39px;">10</div>
<svg style="left:170px;top:805.00px" width="36" height="30" viewBox="0 0 36 30"><g fill="none" stroke="#161513" stroke-width="1.6"><rect x="20.8" y="8.2" width="4.7" height="3.1"/><rect x="10" y="14.2" width="3" height="3.5"/><path d="M20.8 9.7h-9.5v4.5M11.3 17.7v3.4h7.2"/><path d="M21.3 18.5l2.8 2.8l-2.8 2.8l-2.8-2.8z"/></g></svg>
<div class="t" style="top:802px;font-size:17.4px;line-height:17.4px;color:#161513;letter-spacing:0.1px;left:285.57px;">Notify employee</div>
<div class="t" style="top:822px;font-size:14.5px;line-height:14.5px;color:#2a7090;letter-spacing:0.033px;left:285.54px;">Subprocess: Order computer</div>
<div class="t" style="top:814px;font-size:17.4px;line-height:17.4px;color:#161513;letter-spacing:0.9px;right:1299.94px;">28</div>
<div class="t" style="top:814px;font-size:17.4px;line-height:17.4px;color:#161513;right:1082.52px;">0</div>
<div class="t" style="top:814px;font-size:17.4px;line-height:17.4px;color:#161513;right:916.23px;">-</div>
<div class="t" style="top:814px;font-size:17.4px;line-height:17.4px;color:#161513;right:798.22px;">0</div>
<svg style="left:170px;top:861.00px" width="36" height="30" viewBox="0 0 36 30"><g fill="none" stroke="#161513" stroke-width="1.6"><rect x="9.9" y="7.5" width="15.6" height="15.5"/></g></svg>
<div class="t" style="top:868px;font-size:17.4px;line-height:17.4px;color:#161513;letter-spacing:-0.12px;left:284.41px;">Stop</div>
<div class="t" style="top:868px;font-size:17.4px;line-height:17.4px;color:#161513;letter-spacing:0.9px;right:1299.94px;">28</div>
<div class="t" style="top:868px;font-size:17.4px;line-height:17.4px;color:#161513;right:1082.52px;">0</div>
<div class="t" style="top:868px;font-size:17.4px;line-height:17.4px;color:#161513;right:916.23px;">-</div>
<div class="t" style="top:868px;font-size:17.4px;line-height:17.4px;color:#161513;right:798.22px;">0</div>
<svg style="left:0;top:0" width="2030" height="1140"><rect x="152" y="219.00" width="66.1" height="3.4" fill="#161513"/><rect x="101" y="333.85" width="1245" height="1.3" fill="#e5e3e0"/><rect x="101" y="384.51" width="1245" height="1.3" fill="#e5e3e0"/><rect x="101" y="435.16" width="1245" height="1.3" fill="#e5e3e0"/><rect x="101" y="485.82" width="1245" height="1.3" fill="#e5e3e0"/><rect x="101" y="536.37" width="716.4" height="1.5" fill="#5f98b6"/><rect x="817.4" y="535.37" width="146.5" height="1.5" fill="#5f98b6"/><rect x="963.9" y="536.37" width="382" height="1.5" fill="#5f98b6"/><rect x="101" y="586.98" width="1245" height="1.6" fill="#5f98b6"/><rect x="101" y="637.79" width="1245" height="1.3" fill="#e5e3e0"/><rect x="101" y="688.44" width="1245" height="1.3" fill="#e5e3e0"/><rect x="101" y="739.10" width="1245" height="1.3" fill="#e5e3e0"/><rect x="101" y="789.75" width="1245" height="1.3" fill="#e5e3e0"/><rect x="101" y="849.65" width="1245" height="1.3" fill="#e5e3e0"/><rect x="101" y="900.31" width="1245" height="1.3" fill="#e5e3e0"/></svg>
<div class="b" style="left:745.90px;top:753.10px;width:50.30px;height:25.10px;background:#f4dec0;border-radius:5.5px;"></div>
<div class="t" style="top:761px;font-size:11.8px;line-height:11.8px;color:#875214;font-weight:700;left:570.50px;width:400px;text-align:center;transform:scaleX(0.785);">Retried</div>
<div class="b" style="left:1247.00px;top:746.80px;width:37.30px;height:37.90px;background:#ebebea;border-radius:5px;"></div>
<svg style="left:1255.5px;top:757px" width="20" height="17" viewBox="0 0 20 17"><g fill="none" stroke="#161513" stroke-width="1.6"><path d="M2.2 8.6C4.3 5.2 7.1 2.6 10.2 2.6s5.900 2.600 8 6c-2.100 3.400-4.900 6-8 6S4.300 12 2.200 8.600z"/><circle cx="10.2" cy="8.6" r="2.800"/></g></svg>
<svg style="left:0;top:0" width="2030" height="1140"><rect x="1248.8" y="739.80" width="52.6" height="1.2" fill="#dcdad7"/></svg>
<svg style="left:1265.6px;top:779.6px" width="23" height="21" viewBox="0 0 23 21"><g transform="scale(1.13,1.03)"><path d="M5.3 1.5c.9-.5 1.9 0 2.1 1l.9 3.400c.5-.5 1.500-.5 2 .1c.6-.5 1.600-.4 2.100.3c.8-.5 1.900-.1 2.200.8c.6 1.500 1.200 3.700.9 5.600c-.2 1.200-.9 2.100-1.500 3l-.3 1.900c-.1.5-.5.8-1 .8c-.5 0-.9-.2-1.100-.6c-.4.600-1 .8-1.700.8H7.800c-.5 0-.9-.2-1.200-.6L1.800 11c-.6-.8-.3-1.800.5-2.200c.7-.4 1.500-.2 2 .3l1.200 1.300L4.400 3.400c-.2-.8.200-1.600.9-1.900z" fill="#fff" stroke="#111" stroke-width="1.200" stroke-linejoin="round"/><path d="M9 11.500v4M10.600 11.500v4M12.200 11.500v4M13.800 11.500v4" stroke="#111" stroke-width=".8"/></g></svg>
<div class="b" style="left:1342px;top:0;width:688px;height:1140px;background:#fff;box-shadow:-1px 0 6px rgba(0,0,0,.11)"></div>
<div class="b" style="left:1342.00px;top:0.00px;width:688.00px;height:62.00px;background:#f9f8f6;border-bottom:1.3px solid #e9e7e4;height:63px;"></div>
<div class="b" style="left:2025.30px;top:0.00px;width:5.00px;height:1140.00px;background:#f3f2f0;"></div>
<div class="t" style="top:11px;font-size:21.2px;line-height:21.2px;color:#161513;font-weight:700;letter-spacing:-0.064px;left:1392.13px;-webkit-text-stroke:0.4px #161513;">Get badge</div>
<div class="t" style="top:39px;font-size:14.7px;line-height:14.7px;color:#6b6864;letter-spacing:0.042px;left:1391.99px;">Human task overview</div>
<svg style="left:1957.5px;top:24.3px" width="13" height="13" viewBox="0 0 13 13"><path d="M0.800 0.800L12.200 12.200M12.200 0.800L0.800 12.200" stroke="#161513" stroke-width="1.6"/></svg>
<div class="b" style="left:1369.00px;top:97.00px;width:634.00px;height:893.00px;background:#fff;border:1.3px solid #e7e5e2;border-radius:7px;"></div>
<div class="b" style="left:1369.00px;top:1016.00px;width:634.00px;height:200.00px;background:#fff;border:1.3px solid #e7e5e2;border-radius:7px;"></div>
<div class="b" style="left:1342.00px;top:1138.00px;width:688.00px;height:2.00px;background:#f1f0ee;"></div>
<div class="t" style="top:118px;font-size:21px;line-height:21px;color:#161513;font-weight:700;letter-spacing:-0.046px;left:1391.90px;-webkit-text-stroke:0.3px #161513;">By status</div>
<div class="b" style="left:1836.20px;top:113.90px;width:142.50px;height:37.80px;background:#fff;border:1.2px solid #8b8885;border-radius:5px;"></div>
<div class="b" style="left:1837.20px;top:114.90px;width:83.30px;height:35.80px;background:#ebeae8;border-radius:4px 0 0 4px;border-right:1.2px solid #8b8885;"></div>
<div class="t" style="top:125px;font-size:15px;line-height:15px;color:#161513;font-weight:700;letter-spacing:-0.6px;left:1848.70px;">Lifecycle</div>
<div class="t" style="top:125px;font-size:15px;line-height:15px;color:#161513;font-weight:700;letter-spacing:-0.464px;left:1933.20px;">Due</div>
<svg width="0" height="0" style="left:0;top:0"><defs><pattern id="gp" width="6.3" height="6.3" patternUnits="userSpaceOnUse" x="1447.100" y="351"><rect width="6.3" height="6.3" fill="#f2c572"/><path d="M5.800 0v6.300M0 5.800h6.300" stroke="#bf9558" stroke-width="0.75"/></pattern><pattern id="gp2" width="3" height="3" patternUnits="userSpaceOnUse"><rect width="3" height="3" fill="#f2c572"/><path d="M2.600 0v3M0 2.600h3" stroke="#d9ab63" stroke-width="0.600"/></pattern></defs></svg>
<svg style="left:1392.1px;top:189.600px" width="9" height="9"><rect width="8.900" height="8.900" rx="1.600" fill="url(#gp2)"/></svg>
<div class="t" style="top:189px;font-size:10.9px;line-height:10.9px;color:#33302c;letter-spacing:0.049px;left:1406.36px;">Unclaimed</div>
<svg style="left:1475.3px;top:189.600px" width="9" height="9"><rect width="8.900" height="8.900" rx="1.600" fill="#355c63"/></svg>
<div class="t" style="top:189px;font-size:10.9px;line-height:10.9px;color:#33302c;letter-spacing:-0.098px;left:1490.58px;">Assigned</div>
<svg style="left:1551.1px;top:189.600px" width="9" height="9"><rect width="8.900" height="8.900" rx="1.600" fill="#78b6b3"/></svg>
<div class="t" style="top:189px;font-size:10.9px;line-height:10.9px;color:#33302c;letter-spacing:0.051px;left:1565.49px;">Info requested</div>
<svg style="left:1652.7px;top:189.600px" width="9" height="9"><rect width="8.900" height="8.900" rx="1.600" fill="#4c4137"/></svg>
<div class="t" style="top:189px;font-size:10.9px;line-height:10.9px;color:#33302c;letter-spacing:0.048px;left:1666.95px;">Completed</div>
<svg style="left:1737px;top:189.600px" width="9" height="9"><rect width="8.900" height="8.900" rx="1.600" fill="#a9c791"/></svg>
<div class="t" style="top:189px;font-size:10.9px;line-height:10.9px;color:#33302c;letter-spacing:0.095px;left:1751.11px;">Faulted</div>
<svg style="left:1804.6px;top:189.600px" width="9" height="9"><rect width="8.900" height="8.900" rx="1.600" fill="#a9737f"/></svg>
<div class="t" style="top:189px;font-size:10.9px;line-height:10.9px;color:#33302c;letter-spacing:0.075px;left:1819.25px;">Withdrawn</div>
<div class="t" style="top:249px;font-size:10.3px;line-height:10.3px;color:#5f5b57;letter-spacing:0.1px;right:592.20px;">120</div>
<div class="t" style="top:295px;font-size:10.3px;line-height:10.3px;color:#5f5b57;letter-spacing:0.45px;right:597.05px;">90</div>
<div class="t" style="top:341px;font-size:10.3px;line-height:10.3px;color:#5f5b57;letter-spacing:0.45px;right:597.05px;">60</div>
<div class="t" style="top:388px;font-size:10.3px;line-height:10.3px;color:#5f5b57;letter-spacing:0.45px;right:597.05px;">30</div>
<div class="t" style="top:434px;font-size:10.3px;line-height:10.3px;color:#5f5b57;right:597.50px;">0</div>
<svg style="left:0;top:0" width="2030" height="1140"><rect x="1441" y="251.90" width="541" height="1.2" fill="#e6e4e1"/><rect x="1441" y="298.30" width="541" height="1.2" fill="#e6e4e1"/><rect x="1441" y="344.70" width="541" height="1.2" fill="#e6e4e1"/><rect x="1441" y="391.00" width="541" height="1.2" fill="#e6e4e1"/></svg>
<svg style="left:0;top:0" width="2030" height="1140" viewBox="0 0 2030 1140"><path d="M1447.1 437.600V352.5q0-1.500 1.500-1.500h49.800q1.500 0 1.500 1.500V437.600z" fill="url(#gp)"/><path d="M1508.2 437.600V254.4q0-1.500 1.500-1.500h49.800q1.500 0 1.500 1.500V437.600z" fill="#355c63"/><path d="M1569.3 437.600V298.9q0-1.500 1.500-1.500h49.800q1.500 0 1.500 1.500V437.600z" fill="#78b6b3"/><path d="M1630.5 437.600V331.6q0-1.500 1.500-1.500h49.800q1.500 0 1.500 1.500V437.600z" fill="#4c4137"/><path d="M1691.7 437.600V378.2q0-1.500 1.500-1.500h49.800q1.500 0 1.500 1.500V437.600z" fill="#a9c791"/><path d="M1752.9 437.600V276.5q0-1.500 1.500-1.500h49.800q1.500 0 1.500 1.500V437.600z" fill="#a9737f"/></svg>
<svg style="left:0;top:0" width="2030" height="1140"><rect x="1441" y="437.45" width="541" height="1.3" fill="#a9a6a2"/></svg>
<div class="t" style="top:331px;font-size:10.4px;line-height:10.4px;color:#66625e;left:1197.70px;width:400px;text-align:center;transform:rotate(-90deg);transform-origin:50% 58%;">Tasks</div>
<div class="t" style="top:488px;font-size:21px;line-height:21px;color:#161513;font-weight:700;letter-spacing:-0.296px;left:1390.80px;-webkit-text-stroke:0.3px #161513;">By assignee</div>
<div class="t" style="top:540px;font-size:17.2px;line-height:17.2px;color:#161513;letter-spacing:0.277px;left:1391.92px;-webkit-text-stroke:0.35px #161513;">Sort by</div>
<svg style="left:1391.6px;top:569.9px" width="18" height="18" viewBox="0 0 18 18"><circle cx="9" cy="9" r="7.700" fill="#fff" stroke="#161513" stroke-width="1.500"/><circle cx="9" cy="9" r="4.300" fill="#161513"/></svg>
<div class="t" style="top:571px;font-size:17.3px;line-height:17.3px;color:#161513;letter-spacing:-0.123px;left:1418.11px;">Total tasks</div>
<svg style="left:1532px;top:569.9px" width="18" height="18" viewBox="0 0 18 18"><circle cx="9" cy="9" r="7.700" fill="#fff" stroke="#161513" stroke-width="1.500"/></svg>
<div class="t" style="top:571px;font-size:17.3px;line-height:17.3px;color:#161513;letter-spacing:0.059px;left:1557.18px;">Name</div>
<svg style="left:0;top:0" width="2030" height="1140"><rect x="1422" y="640.70" width="548" height="1.2" fill="#e6e4e1"/><rect x="1422" y="690.20" width="548" height="1.2" fill="#e6e4e1"/><rect x="1422" y="739.60" width="548" height="1.2" fill="#e6e4e1"/><rect x="1422" y="789.00" width="548" height="1.2" fill="#e6e4e1"/><rect x="1422" y="838.40" width="548" height="1.2" fill="#e6e4e1"/></svg>
<svg style="left:0;top:0" width="2030" height="1140" viewBox="0 0 2030 1140"><rect x="1442.9" y="791.0" width="36" height="98.6" fill="#355c63"/><path d="M1442.9 789.8V663.3q0-2 2-2h32q2 0 2 2V789.8z" fill="#a9737f"/><rect x="1495.7" y="691.6" width="36" height="198.0" fill="#355c63"/><rect x="1495.7" y="671.9" width="36" height="18.5" fill="#78b6b3"/><rect x="1548.5" y="690.8" width="36" height="198.8" fill="#78b6b3"/><rect x="1602.1" y="843.2" width="34.2" height="46.4" fill="#355c63"/><rect x="1602.1" y="702.0" width="34.2" height="140.0" fill="#78b6b3"/><rect x="1654.1" y="809.0" width="36" height="80.6" fill="#355c63"/><rect x="1654.1" y="709.8" width="36" height="98.0" fill="#a9737f"/><rect x="1706.9" y="855.9" width="36" height="33.7" fill="#355c63"/><rect x="1706.9" y="838.2" width="36" height="16.5" fill="#78b6b3"/><rect x="1706.9" y="779.8" width="36" height="57.2" fill="#a9c791"/><rect x="1706.9" y="720.2" width="36" height="58.4" fill="#a9737f"/><rect x="1759.7" y="730.0" width="36" height="159.6" fill="#a9737f"/><rect x="1812.5" y="740.2" width="36" height="149.4" fill="#4c4137"/><rect x="1865.3" y="840.4" width="36" height="49.2" fill="#a9c791"/><rect x="1865.3" y="778.6" width="36" height="60.6" fill="#a9737f"/><rect x="1918.9" y="838.7" width="34.2" height="50.9" fill="#355c63"/><rect x="1918.9" y="790.7" width="34.2" height="46.8" fill="#4c4137"/></svg>
<div class="t" style="top:836px;font-size:10.8px;line-height:10.8px;color:#fff;left:1260.90px;width:400px;text-align:center;">10</div>
<div class="t" style="top:738px;font-size:10.8px;line-height:10.8px;color:#fff;left:1260.90px;width:400px;text-align:center;">13</div>
<div class="t" style="top:647px;font-size:10.4px;line-height:10.4px;color:#111;font-weight:700;left:1260.90px;width:400px;text-align:center;">23</div>
<div class="t" style="top:786px;font-size:10.8px;line-height:10.8px;color:#fff;left:1313.70px;width:400px;text-align:center;">20</div>
<div class="t" style="top:677px;font-size:10.8px;line-height:10.8px;color:#111;left:1313.70px;width:400px;text-align:center;">2</div>
<div class="t" style="top:660px;font-size:10.4px;line-height:10.4px;color:#111;font-weight:700;left:1313.70px;width:400px;text-align:center;">22</div>
<div class="t" style="top:786px;font-size:10.8px;line-height:10.8px;color:#111;left:1366.50px;width:400px;text-align:center;">20</div>
<div class="t" style="top:679px;font-size:10.4px;line-height:10.4px;color:#111;font-weight:700;left:1366.50px;width:400px;text-align:center;">20</div>
<div class="t" style="top:862px;font-size:10.8px;line-height:10.8px;color:#fff;left:1419.20px;width:400px;text-align:center;">5</div>
<div class="t" style="top:763px;font-size:10.8px;line-height:10.8px;color:#111;left:1419.20px;width:400px;text-align:center;">14</div>
<div class="t" style="top:690px;font-size:10.4px;line-height:10.4px;color:#111;font-weight:700;left:1419.20px;width:400px;text-align:center;">19</div>
<div class="t" style="top:845px;font-size:10.8px;line-height:10.8px;color:#fff;left:1472.10px;width:400px;text-align:center;">8</div>
<div class="t" style="top:755px;font-size:10.8px;line-height:10.8px;color:#fff;left:1472.10px;width:400px;text-align:center;">10</div>
<div class="t" style="top:698px;font-size:10.4px;line-height:10.4px;color:#111;font-weight:700;left:1472.10px;width:400px;text-align:center;">18</div>
<div class="t" style="top:868px;font-size:10.8px;line-height:10.8px;color:#fff;left:1524.90px;width:400px;text-align:center;">3</div>
<div class="t" style="top:842px;font-size:10.8px;line-height:10.8px;color:#111;left:1524.90px;width:400px;text-align:center;">2</div>
<div class="t" style="top:804px;font-size:10.8px;line-height:10.8px;color:#111;left:1524.90px;width:400px;text-align:center;">6</div>
<div class="t" style="top:745px;font-size:10.8px;line-height:10.8px;color:#fff;left:1524.90px;width:400px;text-align:center;">2</div>
<div class="t" style="top:708px;font-size:10.4px;line-height:10.4px;color:#111;font-weight:700;left:1524.90px;width:400px;text-align:center;">17</div>
<div class="t" style="top:806px;font-size:10.8px;line-height:10.8px;color:#fff;left:1577.70px;width:400px;text-align:center;">16</div>
<div class="t" style="top:718px;font-size:10.4px;line-height:10.4px;color:#111;font-weight:700;left:1577.70px;width:400px;text-align:center;">16</div>
<div class="t" style="top:811px;font-size:10.8px;line-height:10.8px;color:#fff;left:1630.50px;width:400px;text-align:center;">15</div>
<div class="t" style="top:728px;font-size:10.4px;line-height:10.4px;color:#111;font-weight:700;left:1630.50px;width:400px;text-align:center;">15</div>
<div class="t" style="top:860px;font-size:10.8px;line-height:10.8px;color:#111;left:1683.30px;width:400px;text-align:center;">5</div>
<div class="t" style="top:805px;font-size:10.8px;line-height:10.8px;color:#fff;left:1683.30px;width:400px;text-align:center;">6</div>
<div class="t" style="top:766px;font-size:10.4px;line-height:10.4px;color:#111;font-weight:700;left:1683.30px;width:400px;text-align:center;">11</div>
<div class="t" style="top:860px;font-size:10.8px;line-height:10.8px;color:#fff;left:1736.00px;width:400px;text-align:center;">5</div>
<div class="t" style="top:806px;font-size:10.8px;line-height:10.8px;color:#fff;left:1736.00px;width:400px;text-align:center;">5</div>
<div class="t" style="top:778px;font-size:10.4px;line-height:10.4px;color:#111;font-weight:700;left:1736.00px;width:400px;text-align:center;">10</div>
<svg style="left:0;top:0" width="2030" height="1140"><rect x="1422" y="889.70" width="548" height="1.4" fill="#55524e"/></svg>
<div class="t" style="top:907px;font-size:10.8px;line-height:10.8px;color:#33302c;letter-spacing:0.1px;left:1262.75px;width:400px;text-align:center;">Adani</div>
<div class="t" style="top:907px;font-size:10.8px;line-height:10.8px;color:#33302c;letter-spacing:0.1px;left:1315.55px;width:400px;text-align:center;">Xiang</div>
<div class="t" style="top:907px;font-size:10.8px;line-height:10.8px;color:#33302c;letter-spacing:0.1px;left:1368.35px;width:400px;text-align:center;">Ghosh</div>
<div class="t" style="top:907px;font-size:10.8px;line-height:10.8px;color:#33302c;letter-spacing:0.1px;left:1421.15px;width:400px;text-align:center;">Reily</div>
<div class="t" style="top:907px;font-size:10.8px;line-height:10.8px;color:#33302c;letter-spacing:0.1px;left:1473.95px;width:400px;text-align:center;">Lopez</div>
<div class="t" style="top:907px;font-size:10.8px;line-height:10.8px;color:#33302c;letter-spacing:0.1px;left:1526.75px;width:400px;text-align:center;">Usman</div>
<div class="t" style="top:907px;font-size:10.8px;line-height:10.8px;color:#33302c;letter-spacing:0.1px;left:1579.55px;width:400px;text-align:center;">Irwin</div>
<div class="t" style="top:907px;font-size:10.8px;line-height:10.8px;color:#33302c;letter-spacing:0.1px;left:1632.35px;width:400px;text-align:center;">Smith</div>
<div class="t" style="top:907px;font-size:10.8px;line-height:10.8px;color:#33302c;letter-spacing:0.1px;left:1685.15px;width:400px;text-align:center;">Quinn</div>
<div class="t" style="top:907px;font-size:10.8px;line-height:10.8px;color:#33302c;letter-spacing:0.1px;left:1737.95px;width:400px;text-align:center;">Clark</div>
<div class="t" style="top:768px;font-size:10.4px;line-height:10.4px;color:#66625e;left:1197.00px;width:400px;text-align:center;transform:rotate(-90deg);transform-origin:50% 58%;">Tasks</div>
<div class="b" style="left:1796.60px;top:929.50px;width:181.30px;height:27.90px;background:#f3f4f6;"></div>
<div class="b" style="left:1432.30px;top:929.30px;width:364.30px;height:28.40px;background:#fff;border:1.2px solid #33302c;border-bottom-color:#5e5c5a;border-radius:1.5px;"></div>
<svg style="left:0;top:0" width="2030" height="1140"><rect x="1436.4" y="939.3" width="3.4" height="7.5" rx="0.6" fill="#4b4a48"/><rect x="1789.1" y="939.3" width="3.4" height="7.5" rx="0.6" fill="#4b4a48"/></svg>
<svg style="left:0;top:0" width="2030" height="1140" viewBox="0 0 2030 1140"><rect x="1452.9" y="944.6" width="13.2" height="10.3" fill="#355c63"/><rect x="1452.9" y="931.2" width="13.2" height="12.2" fill="#a9737f"/><rect x="1488.0" y="934.3" width="13.2" height="20.6" fill="#355c63"/><rect x="1488.0" y="932.3" width="13.2" height="0.9" fill="#78b6b3"/><rect x="1523.1" y="934.3" width="13.2" height="20.6" fill="#78b6b3"/><rect x="1558.2" y="950.0" width="13.2" height="4.9" fill="#355c63"/><rect x="1558.2" y="935.4" width="13.2" height="13.4" fill="#78b6b3"/><rect x="1593.3" y="946.4" width="13.2" height="8.5" fill="#355c63"/><rect x="1593.3" y="936.2" width="13.2" height="9.1" fill="#a9737f"/><rect x="1628.4" y="951.3" width="13.2" height="3.6" fill="#355c63"/><rect x="1628.4" y="949.4" width="13.2" height="0.9" fill="#78b6b3"/><rect x="1628.4" y="943.4" width="13.2" height="4.9" fill="#a9c791"/><rect x="1628.4" y="937.3" width="13.2" height="5.0" fill="#a9737f"/><rect x="1663.5" y="938.3" width="13.2" height="16.6" fill="#a9737f"/><rect x="1698.6" y="939.4" width="13.2" height="15.5" fill="#4c4137"/><rect x="1733.7" y="949.7" width="13.2" height="5.2" fill="#a9c791"/><rect x="1733.7" y="943.3" width="13.2" height="5.2" fill="#a9737f"/><rect x="1768.8" y="949.5" width="13.2" height="5.4" fill="#355c63"/><rect x="1768.8" y="944.6" width="13.2" height="3.8" fill="#4c4137"/><rect x="1804.5" y="946.6" width="13.4" height="10.6" fill="#355c63"/><rect x="1839.6" y="946.6" width="13.4" height="10.6" fill="#a9737f"/><rect x="1874.7" y="948.7" width="13.4" height="8.5" fill="#a9737f"/><rect x="1909.7" y="951.2" width="13.4" height="6.0" fill="#a9c791"/><rect x="1943" y="953.4" width="13.4" height="3.8" fill="#a9737f"/></svg>
<div class="t" style="top:1030px;font-size:21px;line-height:21px;color:#161513;font-weight:700;letter-spacing:0.244px;left:1392.14px;-webkit-text-stroke:0.3px #161513;">Outcome</div>
<div class="b" style="left:1404.20px;top:1078.00px;width:114.00px;height:80.00px;background:#f9f8f7;border:1.2px solid #8f8c89;"></div>
<div class="b" style="left:1530.20px;top:1078.00px;width:114.20px;height:80.00px;background:#f9f8f7;border:1.2px solid #8f8c89;"></div>
<div class="t" style="top:1090px;font-size:14.8px;line-height:14.8px;color:#161513;letter-spacing:-0.006px;left:1429.77px;">Approve</div>
<div class="t" style="top:1090px;font-size:14.8px;line-height:14.8px;color:#161513;letter-spacing:-0.286px;left:1555.09px;">Reject</div>
<div class="t" style="top:1119px;font-size:27px;line-height:27px;color:#161513;font-weight:700;letter-spacing:0.927px;left:1428.71px;-webkit-text-stroke:0.3px #161513;">60%</div>
<div class="t" style="top:1119px;font-size:27px;line-height:27px;color:#161513;font-weight:700;letter-spacing:0.787px;left:1556.09px;-webkit-text-stroke:0.3px #161513;">40%</div>
<div class="b" style="left:0.00px;top:1138.00px;width:2030.00px;height:2.00px;background:#f2f2f1;"></div>
</div>
</body></html>
